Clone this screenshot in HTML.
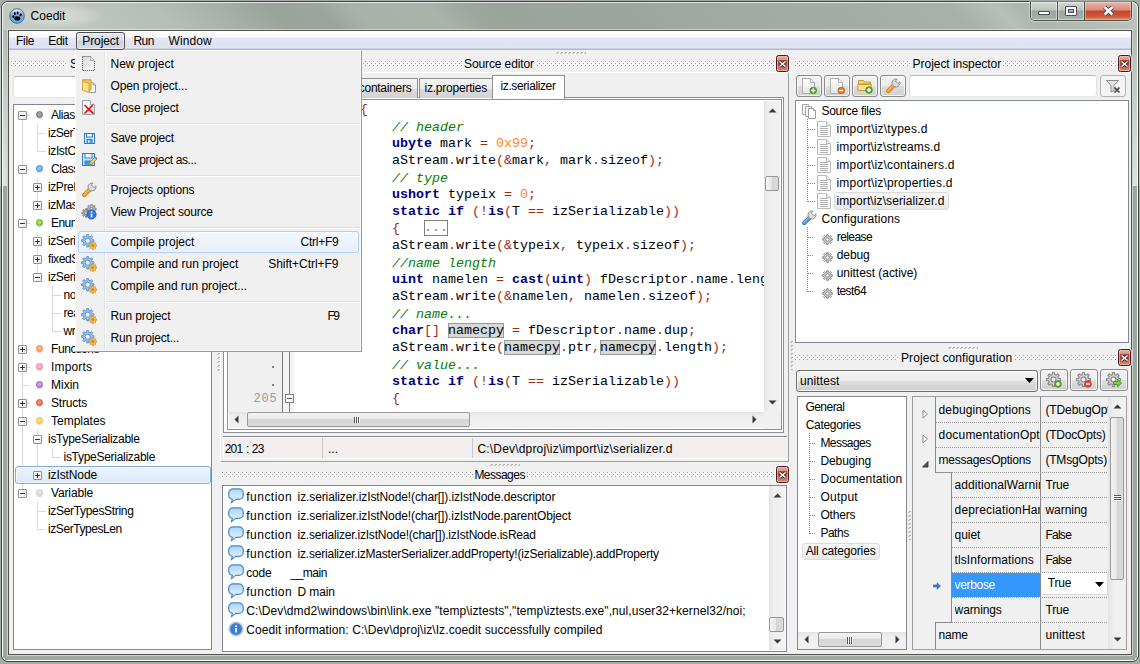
<!DOCTYPE html>
<html><head><meta charset="utf-8"><title>Coedit</title>
<style>
*{box-sizing:border-box;margin:0;padding:0}
html,body{width:1140px;height:664px;overflow:hidden;background:#a3ada5}
body{font-family:"Liberation Sans",sans-serif;font-size:12px;color:#000;position:relative}
.a{position:absolute}
.t{position:absolute;white-space:pre;line-height:14px;height:14px}
.m{font-family:"Liberation Mono",monospace;font-size:13.333px}
#frame{position:absolute;left:1px;top:1px;width:1138px;height:661px;border-radius:7px;
 border:1px solid #3f4340;background:#9fa9a1;overflow:hidden;
 box-shadow:inset 0 0 0 1px rgba(255,255,255,.75)}
#tglass{position:absolute;left:-41px;top:0;width:1220px;height:29px;transform:skewX(45deg);transform-origin:0 0;
 background:linear-gradient(90deg,#c3cac4 0,#c3cac4 40px,#bfc6c0 100px,#b5bdb6 190px,#aab3ab 240px,#99a49b 302px,#9ba59d 352px,#a8b2a9 385px,#a9b3aa 465px,#9ea89f 495px,#99a49b 525px,#9ca69e 645px,#a0aaa2 745px,#a4aea6 895px,#a9b2aa 985px,#b7bfb8 1030px,#adb5ae 1055px,#c0c7c1 1190px)}
#frame:after{content:"";position:absolute;left:0;top:0;right:0;bottom:0;border-radius:6px;box-shadow:inset 0 0 0 1px rgba(255,255,255,.75)}
#client{position:absolute;left:9px;top:31px;width:1122px;height:623px;background:#f0f0f0;
 box-shadow:0 0 0 1px #50554f,0 0 0 2px rgba(255,255,255,.45)}
#menubar{position:absolute;left:0;top:0;width:1122px;height:19px;
 background:linear-gradient(180deg,#ffffff 0,#f7f8fc 6px,#e4e8f5 7px,#dde1f1 16px,#e6e9f5 17px,#aeb6d2 18px,#aeb6d2 19px)}
.grip{position:absolute;height:5px;background-image:
 linear-gradient(#b9b9b9,#b9b9b9),linear-gradient(#b9b9b9,#b9b9b9);
 background-size:1px 1px,1px 1px;}
.xbtn{position:absolute;width:13px;height:17px;border:1px solid #4a1422;border-radius:2.500px;
 background:linear-gradient(180deg,#e6a898 0,#dd9380 4px,#c2482a 4px,#c5533a 9px,#d88a74 15px);
 box-shadow:inset 0 0 0 1px rgba(255,205,195,.55),0 0 0 1px rgba(255,255,255,.7)}
.box{position:absolute;background:#fff;border:1px solid #828790}
.hl{position:absolute;background:#d4d4d4;}
</style></head><body>
<div id="frame"><div id="tglass"></div></div>
<div class="a " style="left:0px;top:8px;width:1px;height:178px;background:#c5cbc6"></div>
<div class="a " style="left:1139px;top:8px;width:1px;height:178px;background:#c5cbc6"></div>
<div class="a " style="left:3px;top:30px;width:4px;height:156px;background:linear-gradient(180deg,#b4bbb5,#dfe3e0)"></div>
<div class="a " style="left:1133px;top:30px;width:4px;height:156px;background:linear-gradient(180deg,#b4bbb5,#dfe3e0)"></div>
<div class="a " style="left:3px;top:186px;width:4px;height:472px;background:#9da79f"></div>
<div class="a " style="left:1133px;top:186px;width:4px;height:472px;background:#9da79f"></div>
<div class="a " style="left:5px;top:656px;width:1130px;height:4px;background:#9fa9a1"></div>
<div class="a " style="left:14px;top:4px;width:90px;height:24px;background:radial-gradient(ellipse at center,rgba(255,255,255,.42) 0,rgba(255,255,255,.2) 45%,rgba(255,255,255,0) 72%)"></div>
<svg class="a" style="left:9px;top:8px" width="16" height="16" viewBox="0 0 16 16"><defs><linearGradient id="aig" x1="0" y1="0" x2="0" y2="1"><stop offset="0" stop-color="#eef0f8"/><stop offset=".45" stop-color="#8f9fd0"/><stop offset="1" stop-color="#3fc4ff"/></linearGradient></defs><circle cx="8" cy="8" r="7.300" fill="url(#aig)" stroke="#3a4f8a" stroke-width=".8"/><ellipse cx="8.300" cy="10.400" rx="3" ry="2.200" fill="#000"/><ellipse cx="4.300" cy="8.600" rx="1.100" ry="1.400" fill="#000" transform="rotate(-30 4.300 8.600)"/><ellipse cx="5.800" cy="5.600" rx="1" ry="1.500" fill="#000" transform="rotate(-12 5.800 5.600)"/><ellipse cx="8.700" cy="4.900" rx="1" ry="1.500" fill="#000" transform="rotate(5 8.700 4.900)"/><ellipse cx="11.700" cy="6.800" rx="1" ry="1.500" fill="#000" transform="rotate(25 11.700 6.800)"/></svg>
<div class="t " style="left:30.6px;top:9px;letter-spacing:0.019px;">Coedit</div>
<div class="a" style="left:1030px;top:2px;width:102px;height:19px;border:1px solid #4b4f4c;border-top:none;border-radius:0 0 5px 5px;overflow:hidden;box-shadow:0 0 0 1px rgba(255,255,255,.35)"><div class="a" style="left:0;top:0;width:27px;height:18px;border-right:1px solid #4b4f4c;background:linear-gradient(180deg,#d3d8d4 0,#bcc4bd 45%,#9aa49c 50%,#a9b2aa 100%);box-shadow:inset 0 0 0 1px rgba(255,255,255,.45)"></div><div class="a" style="left:27px;top:0;width:27px;height:18px;border-right:1px solid #4b4f4c;background:linear-gradient(180deg,#d3d8d4 0,#bcc4bd 45%,#9aa49c 50%,#a9b2aa 100%);box-shadow:inset 0 0 0 1px rgba(255,255,255,.45)"></div><div class="a" style="left:54px;top:0;width:46px;height:18px;background:linear-gradient(180deg,#e9b4a8 0,#d98c7c 45%,#c4432b 50%,#cf5a3c 80%,#d88a6a 100%);box-shadow:inset 0 0 0 1px rgba(255,255,255,.35)"></div></div>
<div class="a " style="left:1038px;top:11px;width:12px;height:4px;background:#fff;border:1px solid #4a4f5f;border-radius:1px"></div>
<div class="a " style="left:1065px;top:6px;width:12px;height:10px;background:#fff;border:1px solid #4a4f5f;border-radius:1px"></div>
<div class="a " style="left:1068px;top:9px;width:6px;height:4px;background:#a7b0a8;border:1px solid #4a4f5f"></div>
<svg class="a" style="left:1102px;top:5px" width="13" height="12" viewBox="0 0 13 12"><path d="M2.600 2.100l7.800 7.400M10.400 2.100l-7.800 7.400" stroke="#47424c" stroke-width="4.400" stroke-linecap="butt"/><path d="M2.600 2.100l7.800 7.400M10.400 2.100l-7.800 7.400" stroke="#fff" stroke-width="2.600" stroke-linecap="butt"/></svg>
<div id="client"><div id="menubar"></div></div>
<div class="t " style="left:16.1px;top:34px;letter-spacing:-0.334px;">File</div>
<div class="t " style="left:48.2px;top:34px;letter-spacing:-0.269px;">Edit</div>
<div class="t " style="left:133.5px;top:34px;letter-spacing:-0.571px;">Run</div>
<div class="t " style="left:168.6px;top:34px;letter-spacing:0.07px;">Window</div>
<div class="a " style="left:76px;top:32px;width:49px;height:18px;border:1px solid #4e4e4e;border-radius:3px;background:linear-gradient(180deg,#e6e8f0 0,#dadde8 45%,#cbd0de 50%,#d9dce8 100%);box-shadow:inset 0 0 0 1px rgba(255,255,255,.5)"></div>
<div class="t " style="left:82.3px;top:34px;letter-spacing:-0.093px;">Project</div>
<svg class="a" style="left:11px;top:60px" width="56" height="7"><defs><pattern id="gp11_61" width="4" height="4" patternUnits="userSpaceOnUse"><rect width="4" height="4" fill="#f6f6f6"/><rect x="0" y="1" width="1" height="1" fill="#9a9a9a"/><rect x="2" y="3" width="1" height="1" fill="#9a9a9a"/><rect x="1" y="2" width="1" height="1" fill="#fff"/><rect x="3" y="0" width="1" height="1" fill="#fff"/></pattern></defs><rect x="0" y="1" width="56" height="5" fill="url(#gp11_61)"/></svg>
<div class="t " style="left:70px;top:57px;">Symbol list</div>
<svg class="a" style="left:133px;top:60px" width="65" height="7"><defs><pattern id="gp133_61" width="4" height="4" patternUnits="userSpaceOnUse"><rect width="4" height="4" fill="#f6f6f6"/><rect x="0" y="1" width="1" height="1" fill="#9a9a9a"/><rect x="2" y="3" width="1" height="1" fill="#9a9a9a"/><rect x="1" y="2" width="1" height="1" fill="#fff"/><rect x="3" y="0" width="1" height="1" fill="#fff"/></pattern></defs><rect x="0" y="1" width="65" height="5" fill="url(#gp133_61)"/></svg>
<div class="xbtn" style="left:201px;top:55px"><svg width="9" height="8" viewBox="0 0 9 8" style="position:absolute;left:1px;top:3.5px"><path d="M1.500 1.500l6 5M7.500 1.500l-6 5" stroke="#2e3446" stroke-width="3.500" stroke-linecap="butt"/><path d="M1.500 1.500l6 5M7.500 1.500l-6 5" stroke="#fff" stroke-width="1.500" stroke-linecap="butt"/></svg></div>
<div class="a " style="left:13px;top:76px;width:199px;height:22px;background:#fff;border:1px solid;border-color:#b5b8bf #dde0e6 #e3e6ec #dde0e6;border-radius:3px"></div>
<div class="a " style="left:13px;top:104px;width:199px;height:546px;background:#fff;border:1px solid #828790"></div>
<div class="a " style="left:22px;top:119px;width:1px;height:374px;background:#d9d9d9"></div>
<div class="a " style="left:37px;top:124px;width:1px;height:28px;background:#d9d9d9"></div>
<div class="a " style="left:37px;top:133px;width:9px;height:1px;background:#d9d9d9"></div>
<div class="a " style="left:37px;top:151px;width:9px;height:1px;background:#d9d9d9"></div>
<div class="a " style="left:37px;top:178px;width:1px;height:28px;background:#d9d9d9"></div>
<div class="a " style="left:37px;top:232px;width:1px;height:46px;background:#d9d9d9"></div>
<div class="a " style="left:52px;top:286px;width:1px;height:46px;background:#d9d9d9"></div>
<div class="a " style="left:52px;top:295px;width:9px;height:1px;background:#d9d9d9"></div>
<div class="a " style="left:52px;top:313px;width:9px;height:1px;background:#d9d9d9"></div>
<div class="a " style="left:52px;top:331px;width:9px;height:1px;background:#d9d9d9"></div>
<div class="a " style="left:37px;top:430px;width:1px;height:46px;background:#d9d9d9"></div>
<div class="a " style="left:52px;top:448px;width:1px;height:10px;background:#d9d9d9"></div>
<div class="a " style="left:52px;top:457px;width:9px;height:1px;background:#d9d9d9"></div>
<div class="a " style="left:37px;top:502px;width:1px;height:28px;background:#d9d9d9"></div>
<div class="a " style="left:37px;top:511px;width:9px;height:1px;background:#d9d9d9"></div>
<div class="a " style="left:37px;top:529px;width:9px;height:1px;background:#d9d9d9"></div>
<div class="a " style="left:22px;top:385px;width:8px;height:1px;background:#d9d9d9"></div>
<div class="a " style="left:27px;top:115px;width:3px;height:1px;background:#d9d9d9"></div>
<div class="a " style="left:27px;top:169px;width:3px;height:1px;background:#d9d9d9"></div>
<div class="a " style="left:27px;top:223px;width:3px;height:1px;background:#d9d9d9"></div>
<div class="a " style="left:27px;top:349px;width:3px;height:1px;background:#d9d9d9"></div>
<div class="a " style="left:27px;top:367px;width:3px;height:1px;background:#d9d9d9"></div>
<div class="a " style="left:27px;top:403px;width:3px;height:1px;background:#d9d9d9"></div>
<div class="a " style="left:27px;top:421px;width:3px;height:1px;background:#d9d9d9"></div>
<div class="a " style="left:27px;top:493px;width:3px;height:1px;background:#d9d9d9"></div>
<div class="a " style="left:15px;top:466px;width:196px;height:18px;border:1px solid #84acdd;border-radius:3px;background:linear-gradient(180deg,#eef5fd 0,#d9e8fb 100%);box-shadow:inset 0 0 0 1px rgba(255,255,255,.6)"></div>
<div class="a " style="left:18px;top:111px;width:9px;height:9px;border:1px solid #8f8f8f;background:linear-gradient(135deg,#fff 0,#ececec 100%);border-radius:1px"><div class="a" style="left:1px;top:3px;width:5px;height:1px;background:#333"></div></div>
<div class="a " style="left:36px;top:111px;width:7.3px;height:7.3px;border-radius:50%;background:radial-gradient(circle at 45% 40%,#a0a0a0 0,#a0a0a0 50%,#6c6c6c 100%);border:1px solid #6c6c6c;box-shadow:0 1px 1px rgba(0,0,0,.18)"></div>
<div class="t " style="left:51px;top:108px;letter-spacing:-0.414px;">Aliases</div>
<div class="t " style="left:48px;top:126px;letter-spacing:-0.445px;">izSerTypes</div>
<div class="t " style="left:48px;top:144px;letter-spacing:-0.382px;">izIstObject</div>
<div class="a " style="left:18px;top:165px;width:9px;height:9px;border:1px solid #8f8f8f;background:linear-gradient(135deg,#fff 0,#ececec 100%);border-radius:1px"><div class="a" style="left:1px;top:3px;width:5px;height:1px;background:#333"></div></div>
<div class="a " style="left:36px;top:165px;width:7.3px;height:7.3px;border-radius:50%;background:radial-gradient(circle at 45% 40%,#80c4f8 0,#80c4f8 50%,#3a8ad8 100%);border:1px solid #3a8ad8;box-shadow:0 1px 1px rgba(0,0,0,.18)"></div>
<div class="t " style="left:51px;top:162px;letter-spacing:-0.457px;">Classes</div>
<div class="a " style="left:33px;top:183px;width:9px;height:9px;border:1px solid #8f8f8f;background:linear-gradient(135deg,#fff 0,#ececec 100%);border-radius:1px"><div class="a" style="left:1px;top:3px;width:5px;height:1px;background:#333"></div><div class="a" style="left:3px;top:1px;width:1px;height:5px;background:#333"></div></div>
<div class="t " style="left:48px;top:180px;letter-spacing:-0.429px;">izPreIstNode</div>
<div class="a " style="left:33px;top:201px;width:9px;height:9px;border:1px solid #8f8f8f;background:linear-gradient(135deg,#fff 0,#ececec 100%);border-radius:1px"><div class="a" style="left:1px;top:3px;width:5px;height:1px;background:#333"></div><div class="a" style="left:3px;top:1px;width:1px;height:5px;background:#333"></div></div>
<div class="t " style="left:48px;top:198px;letter-spacing:-0.397px;">izMasterSerializer</div>
<div class="a " style="left:18px;top:219px;width:9px;height:9px;border:1px solid #8f8f8f;background:linear-gradient(135deg,#fff 0,#ececec 100%);border-radius:1px"><div class="a" style="left:1px;top:3px;width:5px;height:1px;background:#333"></div></div>
<div class="a " style="left:36px;top:219px;width:7.3px;height:7.3px;border-radius:50%;background:radial-gradient(circle at 45% 40%,#a4e048 0,#a4e048 50%,#68a818 100%);border:1px solid #68a818;box-shadow:0 1px 1px rgba(0,0,0,.18)"></div>
<div class="t " style="left:51px;top:216px;letter-spacing:-0.56px;">Enums</div>
<div class="a " style="left:33px;top:237px;width:9px;height:9px;border:1px solid #8f8f8f;background:linear-gradient(135deg,#fff 0,#ececec 100%);border-radius:1px"><div class="a" style="left:1px;top:3px;width:5px;height:1px;background:#333"></div><div class="a" style="left:3px;top:1px;width:1px;height:5px;background:#333"></div></div>
<div class="t " style="left:48px;top:234px;letter-spacing:-0.411px;">izSerializationMode</div>
<div class="a " style="left:33px;top:255px;width:9px;height:9px;border:1px solid #8f8f8f;background:linear-gradient(135deg,#fff 0,#ececec 100%);border-radius:1px"><div class="a" style="left:1px;top:3px;width:5px;height:1px;background:#333"></div><div class="a" style="left:3px;top:1px;width:1px;height:5px;background:#333"></div></div>
<div class="t " style="left:48px;top:252px;letter-spacing:-0.439px;">fixedSerTypes</div>
<div class="a " style="left:33px;top:273px;width:9px;height:9px;border:1px solid #8f8f8f;background:linear-gradient(135deg,#fff 0,#ececec 100%);border-radius:1px"><div class="a" style="left:1px;top:3px;width:5px;height:1px;background:#333"></div></div>
<div class="t " style="left:48px;top:270px;letter-spacing:-0.4px;">izSerializationFormat</div>
<div class="t " style="left:63.5px;top:288px;letter-spacing:-0.501px;">none</div>
<div class="t " style="left:63.5px;top:306px;letter-spacing:-0.434px;">reader</div>
<div class="t " style="left:63.5px;top:324px;letter-spacing:-0.367px;">writer</div>
<div class="a " style="left:18px;top:345px;width:9px;height:9px;border:1px solid #8f8f8f;background:linear-gradient(135deg,#fff 0,#ececec 100%);border-radius:1px"><div class="a" style="left:1px;top:3px;width:5px;height:1px;background:#333"></div><div class="a" style="left:3px;top:1px;width:1px;height:5px;background:#333"></div></div>
<div class="a " style="left:36px;top:345px;width:7.3px;height:7.3px;border-radius:50%;background:radial-gradient(circle at 45% 40%,#ffb47c 0,#ffb47c 50%,#e8853a 100%);border:1px solid #e8853a;box-shadow:0 1px 1px rgba(0,0,0,.18)"></div>
<div class="t " style="left:51px;top:342px;letter-spacing:-0.434px;">Functions</div>
<div class="a " style="left:18px;top:363px;width:9px;height:9px;border:1px solid #8f8f8f;background:linear-gradient(135deg,#fff 0,#ececec 100%);border-radius:1px"><div class="a" style="left:1px;top:3px;width:5px;height:1px;background:#333"></div><div class="a" style="left:3px;top:1px;width:1px;height:5px;background:#333"></div></div>
<div class="a " style="left:36px;top:363px;width:7.3px;height:7.3px;border-radius:50%;background:radial-gradient(circle at 45% 40%,#ffb4c4 0,#ffb4c4 50%,#e8809a 100%);border:1px solid #e8809a;box-shadow:0 1px 1px rgba(0,0,0,.18)"></div>
<div class="t " style="left:51px;top:360px;letter-spacing:0.17px;">Imports</div>
<div class="a " style="left:36px;top:381px;width:7.3px;height:7.3px;border-radius:50%;background:radial-gradient(circle at 45% 40%,#cc9ce4 0,#cc9ce4 50%,#9a50b8 100%);border:1px solid #9a50b8;box-shadow:0 1px 1px rgba(0,0,0,.18)"></div>
<div class="t " style="left:51px;top:378px;letter-spacing:-0.0px;">Mixin</div>
<div class="a " style="left:18px;top:399px;width:9px;height:9px;border:1px solid #8f8f8f;background:linear-gradient(135deg,#fff 0,#ececec 100%);border-radius:1px"><div class="a" style="left:1px;top:3px;width:5px;height:1px;background:#333"></div><div class="a" style="left:3px;top:1px;width:1px;height:5px;background:#333"></div></div>
<div class="a " style="left:36px;top:399px;width:7.3px;height:7.3px;border-radius:50%;background:radial-gradient(circle at 45% 40%,#f8866c 0,#f8866c 50%,#d84a30 100%);border:1px solid #d84a30;box-shadow:0 1px 1px rgba(0,0,0,.18)"></div>
<div class="t " style="left:51px;top:396px;letter-spacing:-0.192px;">Structs</div>
<div class="a " style="left:18px;top:417px;width:9px;height:9px;border:1px solid #8f8f8f;background:linear-gradient(135deg,#fff 0,#ececec 100%);border-radius:1px"><div class="a" style="left:1px;top:3px;width:5px;height:1px;background:#333"></div></div>
<div class="a " style="left:36px;top:417px;width:7.3px;height:7.3px;border-radius:50%;background:radial-gradient(circle at 45% 40%,#ffdc78 0,#ffdc78 50%,#f0b830 100%);border:1px solid #f0b830;box-shadow:0 1px 1px rgba(0,0,0,.18)"></div>
<div class="t " style="left:51px;top:414px;letter-spacing:-0.01px;">Templates</div>
<div class="a " style="left:33px;top:435px;width:9px;height:9px;border:1px solid #8f8f8f;background:linear-gradient(135deg,#fff 0,#ececec 100%);border-radius:1px"><div class="a" style="left:1px;top:3px;width:5px;height:1px;background:#333"></div></div>
<div class="t " style="left:48px;top:432px;letter-spacing:-0.284px;">isTypeSerializable</div>
<div class="t " style="left:63.5px;top:450px;letter-spacing:-0.284px;">isTypeSerializable</div>
<div class="a " style="left:33px;top:471px;width:9px;height:9px;border:1px solid #8f8f8f;background:linear-gradient(135deg,#fff 0,#ececec 100%);border-radius:1px"><div class="a" style="left:1px;top:3px;width:5px;height:1px;background:#333"></div><div class="a" style="left:3px;top:1px;width:1px;height:5px;background:#333"></div></div>
<div class="t " style="left:48px;top:468px;letter-spacing:-0.114px;">izIstNode</div>
<div class="a " style="left:18px;top:489px;width:9px;height:9px;border:1px solid #8f8f8f;background:linear-gradient(135deg,#fff 0,#ececec 100%);border-radius:1px"><div class="a" style="left:1px;top:3px;width:5px;height:1px;background:#333"></div></div>
<div class="a " style="left:36px;top:489px;width:7.3px;height:7.3px;border-radius:50%;background:radial-gradient(circle at 45% 40%,#e6e6e6 0,#e6e6e6 50%,#c8c8c8 100%);border:1px solid #c8c8c8;box-shadow:0 1px 1px rgba(0,0,0,.18)"></div>
<div class="t " style="left:51px;top:486px;letter-spacing:-0.142px;">Variable</div>
<div class="t " style="left:48px;top:504px;letter-spacing:-0.325px;">izSerTypesString</div>
<div class="t " style="left:48px;top:522px;letter-spacing:-0.429px;">izSerTypesLen</div>
<svg class="a" style="left:217px;top:340px" width="4" height="32"><defs><pattern id="vg" width="4" height="4" patternUnits="userSpaceOnUse"><rect x="1" y="1" width="2" height="1" fill="#b0b0b0"/><rect x="0" y="2" width="2" height="1" fill="#c8c8c8"/></pattern></defs><rect width="4" height="32" fill="url(#vg)"/></svg>
<svg class="a" style="left:556px;top:51px" width="30" height="4"><defs><pattern id="mg" width="4" height="4" patternUnits="userSpaceOnUse"><rect x="1" y="1" width="2" height="1" fill="#b4b4b4"/><rect x="0" y="2" width="2" height="1" fill="#c9c9c9"/></pattern></defs><rect width="30" height="4" fill="url(#mg)"/></svg>
<div class="a " style="left:220px;top:72px;width:569px;height:390px;border:1px solid #fff;border-right-color:#a0a0a0;border-bottom-color:#a0a0a0"></div>
<svg class="a" style="left:225px;top:60px" width="238" height="7"><defs><pattern id="gp225_61" width="4" height="4" patternUnits="userSpaceOnUse"><rect width="4" height="4" fill="#f6f6f6"/><rect x="0" y="1" width="1" height="1" fill="#9a9a9a"/><rect x="2" y="3" width="1" height="1" fill="#9a9a9a"/><rect x="1" y="2" width="1" height="1" fill="#fff"/><rect x="3" y="0" width="1" height="1" fill="#fff"/></pattern></defs><rect x="0" y="1" width="238" height="5" fill="url(#gp225_61)"/></svg>
<div class="t " style="left:464px;top:57px;letter-spacing:-0.106px;">Source editor</div>
<svg class="a" style="left:537px;top:60px" width="237" height="7"><defs><pattern id="gp537_61" width="4" height="4" patternUnits="userSpaceOnUse"><rect width="4" height="4" fill="#f6f6f6"/><rect x="0" y="1" width="1" height="1" fill="#9a9a9a"/><rect x="2" y="3" width="1" height="1" fill="#9a9a9a"/><rect x="1" y="2" width="1" height="1" fill="#fff"/><rect x="3" y="0" width="1" height="1" fill="#fff"/></pattern></defs><rect x="0" y="1" width="237" height="5" fill="url(#gp537_61)"/></svg>
<div class="xbtn" style="left:776px;top:55px"><svg width="9" height="8" viewBox="0 0 9 8" style="position:absolute;left:1px;top:3.5px"><path d="M1.500 1.500l6 5M7.500 1.500l-6 5" stroke="#2e3446" stroke-width="3.500" stroke-linecap="butt"/><path d="M1.500 1.500l6 5M7.500 1.500l-6 5" stroke="#fff" stroke-width="1.500" stroke-linecap="butt"/></svg></div>
<div class="a " style="left:223px;top:97px;width:561px;height:336px;border:1px solid #8b8f98;background:#fff"></div>
<div class="a " style="left:225px;top:78px;width:57px;height:20px;border:1px solid #8e8f91;border-bottom:none;background:linear-gradient(180deg,#f3f3f3 0,#ebebeb 50%,#dcdcdc 51%,#d2d2d2 100%);"></div>
<div class="t " style="left:231px;top:81px;letter-spacing:-0.335px;">iz.types</div>
<div class="a " style="left:282px;top:78px;width:60px;height:20px;border:1px solid #8e8f91;border-bottom:none;background:linear-gradient(180deg,#f3f3f3 0,#ebebeb 50%,#dcdcdc 51%,#d2d2d2 100%);"></div>
<div class="t " style="left:288px;top:81px;letter-spacing:-0.567px;">iz.streams</div>
<div class="a " style="left:342px;top:78px;width:76px;height:20px;border:1px solid #8e8f91;border-bottom:none;background:linear-gradient(180deg,#f3f3f3 0,#ebebeb 50%,#dcdcdc 51%,#d2d2d2 100%);"></div>
<div class="t " style="left:347.5px;top:81px;letter-spacing:-0.259px;">iz.containers</div>
<div class="a " style="left:419px;top:78px;width:74px;height:20px;border:1px solid #8e8f91;border-bottom:none;background:linear-gradient(180deg,#f3f3f3 0,#ebebeb 50%,#dcdcdc 51%,#d2d2d2 100%);"></div>
<div class="t " style="left:424.5px;top:81px;letter-spacing:-0.22px;">iz.properties</div>
<div class="a " style="left:492px;top:75px;width:73px;height:24px;border:1px solid #8e8f91;border-bottom:none;background:#fff"></div>
<div class="t " style="left:500.5px;top:79px;letter-spacing:-0.386px;">iz.serializer</div>
<div class="a " style="left:227px;top:99px;width:555px;height:331px;border:1px solid #8b8f98;background:#fff"></div>
<div class="a " style="left:228px;top:100px;width:54px;height:312px;background:#f0f0f0"></div>
<div class="a " style="left:282px;top:100px;width:1px;height:312px;background:#7a7a7a"></div>
<div class="a " style="left:283px;top:100px;width:11px;height:312px;background:#f4f4f4"></div>
<div class="a " style="left:289px;top:100px;width:1px;height:312px;background:#7f7f7f"></div>
<div class="a " style="left:285px;top:394px;width:9px;height:9px;border:1px solid #7f7f7f;background:#f4f4f4"><div class="a" style="left:1px;top:3px;width:5px;height:1px;background:#555"></div></div>
<div class="t m" style="left:253.5px;top:392px;color:#9a9a9a;font-size:12px;letter-spacing:0.8px">205</div>
<div class="a " style="left:272px;top:366px;width:2px;height:2px;background:#8f7f7f"></div>
<div class="a " style="left:272px;top:384px;width:2px;height:2px;background:#8f7f7f"></div>
<div class="a m" style="left:296px;top:101px;width:468px;height:311px;overflow:hidden;line-height:17px"><div style="height:17px;white-space:pre">        <span style="color:#9c2a1a">{</span></div><div style="height:17px;white-space:pre">            <i style="color:#087c08;position:relative;top:1px">// header</i></div><div style="height:17px;white-space:pre">            <b style="color:#000080">ubyte</b> mark <span style="color:#9c2a1a">=</span> <span style="color:#ff8a1a">0x99</span><span style="color:#9c2a1a">;</span></div><div style="height:17px;white-space:pre">            aStream<span style="color:#9c2a1a">.</span>write<span style="color:#9c2a1a">(&amp;</span>mark<span style="color:#9c2a1a">,</span> mark<span style="color:#9c2a1a">.</span>sizeof<span style="color:#9c2a1a">);</span></div><div style="height:17px;white-space:pre">            <i style="color:#087c08;position:relative;top:1px">// type</i></div><div style="height:17px;white-space:pre">            <b style="color:#000080">ushort</b> typeix <span style="color:#9c2a1a">=</span> <span style="color:#ff8a1a">0</span><span style="color:#9c2a1a">;</span></div><div style="height:17px;white-space:pre">            <b style="color:#000080">static</b> <b style="color:#000080">if</b> <span style="color:#9c2a1a">(!</span><b style="color:#000080">is</b><span style="color:#9c2a1a">(</span>T <span style="color:#9c2a1a">==</span> izSerializable<span style="color:#9c2a1a">))</span></div><div style="height:17px;white-space:pre">            <span style="color:#9c2a1a">{</span>   <span style="color:#808080;box-shadow:0 0 0 1px #808080 inset;display:inline-block;height:16px;line-height:15px;vertical-align:top;margin-top:0px">...</span></div><div style="height:17px;white-space:pre">            aStream<span style="color:#9c2a1a">.</span>write<span style="color:#9c2a1a">(&amp;</span>typeix<span style="color:#9c2a1a">,</span> typeix<span style="color:#9c2a1a">.</span>sizeof<span style="color:#9c2a1a">);</span></div><div style="height:17px;white-space:pre">            <i style="color:#087c08;position:relative;top:1px">//name length</i></div><div style="height:17px;white-space:pre">            <b style="color:#000080">uint</b> namelen <span style="color:#9c2a1a">=</span> <b style="color:#000080">cast</b><span style="color:#9c2a1a">(</span><b style="color:#000080">uint</b><span style="color:#9c2a1a">)</span> fDescriptor<span style="color:#9c2a1a">.</span>name<span style="color:#9c2a1a">.</span>length<span style="color:#9c2a1a">;</span></div><div style="height:17px;white-space:pre">            aStream<span style="color:#9c2a1a">.</span>write<span style="color:#9c2a1a">(&amp;</span>namelen<span style="color:#9c2a1a">,</span> namelen<span style="color:#9c2a1a">.</span>sizeof<span style="color:#9c2a1a">);</span></div><div style="height:17px;white-space:pre">            <i style="color:#087c08;position:relative;top:1px">// name...</i></div><div style="height:17px;white-space:pre">            <b style="color:#000080">char</b><span style="color:#9c2a1a">[]</span> <span style="background:#d8d8d8;box-shadow:0 0 0 1px #9a9a9a inset">namecpy</span> <span style="color:#9c2a1a">=</span> fDescriptor<span style="color:#9c2a1a">.</span>name<span style="color:#9c2a1a">.</span>dup<span style="color:#9c2a1a">;</span></div><div style="height:17px;white-space:pre">            aStream<span style="color:#9c2a1a">.</span>write<span style="color:#9c2a1a">(</span><span style="background:#d8d8d8;box-shadow:0 0 0 1px #9a9a9a inset">namecpy</span><span style="color:#9c2a1a">.</span>ptr<span style="color:#9c2a1a">,</span><span style="background:#d8d8d8;box-shadow:0 0 0 1px #9a9a9a inset">namecpy</span><span style="color:#9c2a1a">.</span>length<span style="color:#9c2a1a">);</span></div><div style="height:17px;white-space:pre">            <i style="color:#087c08;position:relative;top:1px">// value...</i></div><div style="height:17px;white-space:pre">            <b style="color:#000080">static</b> <b style="color:#000080">if</b> <span style="color:#9c2a1a">(!</span><b style="color:#000080">is</b><span style="color:#9c2a1a">(</span>T <span style="color:#9c2a1a">==</span> izSerializable<span style="color:#9c2a1a">))</span></div><div style="height:17px;white-space:pre">            <span style="color:#9c2a1a">{</span></div></div>
<div class="a " style="left:764px;top:101px;width:16px;height:310px;background:linear-gradient(90deg,#e3e3e3 0,#efefef 30%,#f1f1f1 100%)"></div>
<svg class="a" style="left:768px;top:106px" width="9" height="9" viewBox="0 0 9 9"><path d="M0.500 6.500L4.500 2.500L8.500 6.500Z" fill="#3a3a3a"/></svg>
<svg class="a" style="left:768px;top:398px" width="9" height="9" viewBox="0 0 9 9"><path d="M0.500 2.500L4.500 6.500L8.500 2.500Z" fill="#3a3a3a"/></svg>
<div class="a " style="left:765px;top:176px;width:14px;height:15px;border:1px solid #979797;border-radius:2px;background:linear-gradient(90deg,#f4f4f4 0,#e8e8e8 45%,#d4d4d4 50%,#dcdcdc 100%)"></div>
<div class="a " style="left:229px;top:412px;width:535px;height:16px;background:linear-gradient(180deg,#e3e3e3 0,#efefef 30%,#f1f1f1 100%)"></div>
<div class="a " style="left:764px;top:411px;width:17px;height:18px;background:#f0f0f0"></div>
<svg class="a" style="left:232px;top:415px" width="9" height="9" viewBox="0 0 9 9"><path d="M6.500 0.500L2.500 4.500L6.500 8.500Z" fill="#3a3a3a"/></svg>
<svg class="a" style="left:750px;top:415px" width="9" height="9" viewBox="0 0 9 9"><path d="M2.500 0.500L6.500 4.500L2.500 8.500Z" fill="#3a3a3a"/></svg>
<div class="a " style="left:247px;top:412px;width:223px;height:15px;border:1px solid #979797;border-radius:2px;background:linear-gradient(180deg,#f4f4f4 0,#e8e8e8 45%,#d4d4d4 50%,#dcdcdc 100%)"><div class="a" style="left:106px;top:4px;width:1px;height:6px;background:#555;box-shadow:2px 0 0 #555,4px 0 0 #555,1px 0 0 #fff,3px 0 0 #fff,5px 0 0 #fff"></div></div>
<div class="a " style="left:223px;top:436px;width:564px;height:1px;background:#8a8a8a"></div>
<div class="a " style="left:223px;top:437px;width:563px;height:22px;background:#fff"></div>
<div class="a " style="left:224px;top:438px;width:562px;height:20px;background:#f1eeed"></div>
<div class="a " style="left:322px;top:438px;width:1px;height:20px;background:#c8c5c4"></div>
<div class="a " style="left:472px;top:438px;width:1px;height:20px;background:#c8c5c4"></div>
<div class="t " style="left:224.8px;top:442px;letter-spacing:-0.874px;">201</div>
<div class="t " style="left:246px;top:442px;">:</div>
<div class="t " style="left:251.8px;top:442px;letter-spacing:-0.774px;">23</div>
<div class="t " style="left:328px;top:442px;">...</div>
<div class="t " style="left:477.4px;top:442px;letter-spacing:0.188px;">C:\Dev\dproj\iz\import\iz\serializer.d</div>
<svg class="a" style="left:490px;top:463px" width="30" height="4"><rect width="30" height="4" fill="url(#mg)"/></svg>
<svg class="a" style="left:222px;top:471px" width="251" height="7"><defs><pattern id="gp222_472" width="4" height="4" patternUnits="userSpaceOnUse"><rect width="4" height="4" fill="#f6f6f6"/><rect x="0" y="1" width="1" height="1" fill="#9a9a9a"/><rect x="2" y="3" width="1" height="1" fill="#9a9a9a"/><rect x="1" y="2" width="1" height="1" fill="#fff"/><rect x="3" y="0" width="1" height="1" fill="#fff"/></pattern></defs><rect x="0" y="1" width="251" height="5" fill="url(#gp222_472)"/></svg>
<div class="t " style="left:474.4px;top:468px;letter-spacing:-0.524px;">Messages</div>
<svg class="a" style="left:527px;top:471px" width="247" height="7"><defs><pattern id="gp527_472" width="4" height="4" patternUnits="userSpaceOnUse"><rect width="4" height="4" fill="#f6f6f6"/><rect x="0" y="1" width="1" height="1" fill="#9a9a9a"/><rect x="2" y="3" width="1" height="1" fill="#9a9a9a"/><rect x="1" y="2" width="1" height="1" fill="#fff"/><rect x="3" y="0" width="1" height="1" fill="#fff"/></pattern></defs><rect x="0" y="1" width="247" height="5" fill="url(#gp527_472)"/></svg>
<div class="xbtn" style="left:776px;top:466px"><svg width="9" height="8" viewBox="0 0 9 8" style="position:absolute;left:1px;top:3.5px"><path d="M1.500 1.500l6 5M7.500 1.500l-6 5" stroke="#2e3446" stroke-width="3.500" stroke-linecap="butt"/><path d="M1.500 1.500l6 5M7.500 1.500l-6 5" stroke="#fff" stroke-width="1.500" stroke-linecap="butt"/></svg></div>
<div class="a " style="left:222px;top:485px;width:565px;height:167px;border:1px solid #828790;background:#fff"></div>
<div class="a" style="left:228px;top:488px;width:16px;height:16px;"><svg width="16" height="16" viewBox="0 0 16 16" ><defs><linearGradient id="bg" x1="0" y1="0" x2="0" y2="1"><stop offset="0" stop-color="#a9d5f9"/><stop offset="1" stop-color="#eef7ff"/></linearGradient></defs><path d="M5 .800h6a4.300 4.300 0 0 1 4.300 4.300v2a4.300 4.300 0 0 1-4.300 4.300h-3.300l-4.500 3.500 1.300-3.600a4.300 4.300 0 0 1-3.800-4.200v-2a4.300 4.300 0 0 1 4.300-4.300z" fill="url(#bg)" stroke="#4b8acb" stroke-width="1.200" stroke-linejoin="round"/></svg></div>
<div class="t " style="left:246.3px;top:490px;letter-spacing:0.471px;">function</div>
<div class="t " style="left:297.6px;top:490px;letter-spacing:-0.108px;">iz.serializer.izIstNode!(char[]).izIstNode.descriptor</div>
<div class="a" style="left:228px;top:507px;width:16px;height:16px;"><svg width="16" height="16" viewBox="0 0 16 16" ><defs><linearGradient id="bg" x1="0" y1="0" x2="0" y2="1"><stop offset="0" stop-color="#a9d5f9"/><stop offset="1" stop-color="#eef7ff"/></linearGradient></defs><path d="M5 .800h6a4.300 4.300 0 0 1 4.300 4.300v2a4.300 4.300 0 0 1-4.300 4.300h-3.300l-4.500 3.500 1.300-3.600a4.300 4.300 0 0 1-3.800-4.200v-2a4.300 4.300 0 0 1 4.300-4.300z" fill="url(#bg)" stroke="#4b8acb" stroke-width="1.200" stroke-linejoin="round"/></svg></div>
<div class="t " style="left:246.3px;top:509px;letter-spacing:0.471px;">function</div>
<div class="t " style="left:297.6px;top:509px;letter-spacing:-0.11px;">iz.serializer.izIstNode!(char[]).izIstNode.parentObject</div>
<div class="a" style="left:228px;top:526px;width:16px;height:16px;"><svg width="16" height="16" viewBox="0 0 16 16" ><defs><linearGradient id="bg" x1="0" y1="0" x2="0" y2="1"><stop offset="0" stop-color="#a9d5f9"/><stop offset="1" stop-color="#eef7ff"/></linearGradient></defs><path d="M5 .800h6a4.300 4.300 0 0 1 4.300 4.300v2a4.300 4.300 0 0 1-4.300 4.300h-3.300l-4.500 3.500 1.300-3.600a4.300 4.300 0 0 1-3.800-4.200v-2a4.300 4.300 0 0 1 4.300-4.300z" fill="url(#bg)" stroke="#4b8acb" stroke-width="1.200" stroke-linejoin="round"/></svg></div>
<div class="t " style="left:246.3px;top:528px;letter-spacing:0.471px;">function</div>
<div class="t " style="left:297.6px;top:528px;letter-spacing:-0.202px;">iz.serializer.izIstNode!(char[]).izIstNode.isRead</div>
<div class="a" style="left:228px;top:545px;width:16px;height:16px;"><svg width="16" height="16" viewBox="0 0 16 16" ><defs><linearGradient id="bg" x1="0" y1="0" x2="0" y2="1"><stop offset="0" stop-color="#a9d5f9"/><stop offset="1" stop-color="#eef7ff"/></linearGradient></defs><path d="M5 .800h6a4.300 4.300 0 0 1 4.300 4.300v2a4.300 4.300 0 0 1-4.300 4.300h-3.300l-4.500 3.500 1.300-3.600a4.300 4.300 0 0 1-3.800-4.200v-2a4.300 4.300 0 0 1 4.300-4.300z" fill="url(#bg)" stroke="#4b8acb" stroke-width="1.200" stroke-linejoin="round"/></svg></div>
<div class="t " style="left:246.3px;top:547px;letter-spacing:0.471px;">function</div>
<div class="t " style="left:297.6px;top:547px;letter-spacing:-0.213px;">iz.serializer.izMasterSerializer.addProperty!(izSerializable).addProperty</div>
<div class="a" style="left:228px;top:564px;width:16px;height:16px;"><svg width="16" height="16" viewBox="0 0 16 16" ><defs><linearGradient id="bg" x1="0" y1="0" x2="0" y2="1"><stop offset="0" stop-color="#a9d5f9"/><stop offset="1" stop-color="#eef7ff"/></linearGradient></defs><path d="M5 .800h6a4.300 4.300 0 0 1 4.300 4.300v2a4.300 4.300 0 0 1-4.300 4.300h-3.300l-4.500 3.500 1.300-3.600a4.300 4.300 0 0 1-3.800-4.200v-2a4.300 4.300 0 0 1 4.300-4.300z" fill="url(#bg)" stroke="#4b8acb" stroke-width="1.200" stroke-linejoin="round"/></svg></div>
<div class="t " style="left:246.3px;top:566px;letter-spacing:-0.205px;">code</div>
<div class="t " style="left:290.5px;top:566px;letter-spacing:-0.51px;">__main</div>
<div class="a" style="left:228px;top:583px;width:16px;height:16px;"><svg width="16" height="16" viewBox="0 0 16 16" ><defs><linearGradient id="bg" x1="0" y1="0" x2="0" y2="1"><stop offset="0" stop-color="#a9d5f9"/><stop offset="1" stop-color="#eef7ff"/></linearGradient></defs><path d="M5 .800h6a4.300 4.300 0 0 1 4.300 4.300v2a4.300 4.300 0 0 1-4.300 4.300h-3.300l-4.500 3.500 1.300-3.600a4.300 4.300 0 0 1-3.800-4.200v-2a4.300 4.300 0 0 1 4.300-4.300z" fill="url(#bg)" stroke="#4b8acb" stroke-width="1.200" stroke-linejoin="round"/></svg></div>
<div class="t " style="left:246.3px;top:585px;letter-spacing:0.471px;">function</div>
<div class="t " style="left:297.6px;top:585px;letter-spacing:-0.152px;">D main</div>
<div class="a" style="left:228px;top:602px;width:16px;height:16px;"><svg width="16" height="16" viewBox="0 0 16 16" ><defs><linearGradient id="bg" x1="0" y1="0" x2="0" y2="1"><stop offset="0" stop-color="#a9d5f9"/><stop offset="1" stop-color="#eef7ff"/></linearGradient></defs><path d="M5 .800h6a4.300 4.300 0 0 1 4.300 4.300v2a4.300 4.300 0 0 1-4.300 4.300h-3.300l-4.500 3.500 1.300-3.600a4.300 4.300 0 0 1-3.800-4.200v-2a4.300 4.300 0 0 1 4.300-4.300z" fill="url(#bg)" stroke="#4b8acb" stroke-width="1.200" stroke-linejoin="round"/></svg></div>
<div class="t " style="left:246.3px;top:604px;letter-spacing:0.079px;">C:\Dev\dmd2\windows\bin\link.exe "temp\iztests","temp\iztests.exe",nul,user32+kernel32/noi;</div>
<div class="a" style="left:228px;top:621px;width:16px;height:16px;"><svg width="16" height="16" viewBox="0 0 16 16" ><circle cx="8" cy="8" r="6.5" fill="#3f7fcf" stroke="#c9d9ee" stroke-width="1"/><circle cx="8" cy="8" r="7" fill="none" stroke="#8fa9cc" stroke-width=".6"/><rect x="7.200" y="7" width="1.700" height="4.500" fill="#fff"/><rect x="7.200" y="4.300" width="1.700" height="1.700" fill="#fff"/></svg></div>
<div class="t " style="left:246.3px;top:623px;letter-spacing:0.092px;">Coedit information: C:\Dev\dproj\iz\Iz.coedit successfully compiled</div>
<div class="a " style="left:769px;top:486px;width:16px;height:164px;background:linear-gradient(90deg,#e3e3e3 0,#efefef 30%,#f1f1f1 100%)"></div>
<svg class="a" style="left:773px;top:491px" width="9" height="9" viewBox="0 0 9 9"><path d="M0.500 6.500L4.500 2.500L8.500 6.500Z" fill="#3a3a3a"/></svg>
<svg class="a" style="left:773px;top:637px" width="9" height="9" viewBox="0 0 9 9"><path d="M0.500 2.500L4.500 6.500L8.500 2.500Z" fill="#3a3a3a"/></svg>
<div class="a " style="left:769px;top:617px;width:15px;height:15px;border:1px solid #979797;border-radius:2px;background:linear-gradient(90deg,#f4f4f4 0,#e8e8e8 45%,#d4d4d4 50%,#dcdcdc 100%)"></div>
<svg class="a" style="left:790px;top:340px" width="4" height="30"><rect width="4" height="30" fill="url(#vg)"/></svg>
<svg class="a" style="left:795px;top:60px" width="116" height="7"><defs><pattern id="gp795_61" width="4" height="4" patternUnits="userSpaceOnUse"><rect width="4" height="4" fill="#f6f6f6"/><rect x="0" y="1" width="1" height="1" fill="#9a9a9a"/><rect x="2" y="3" width="1" height="1" fill="#9a9a9a"/><rect x="1" y="2" width="1" height="1" fill="#fff"/><rect x="3" y="0" width="1" height="1" fill="#fff"/></pattern></defs><rect x="0" y="1" width="116" height="5" fill="url(#gp795_61)"/></svg>
<div class="t " style="left:912.6px;top:57px;letter-spacing:-0.046px;">Project inspector</div>
<svg class="a" style="left:1003px;top:60px" width="113" height="7"><defs><pattern id="gp1003_61" width="4" height="4" patternUnits="userSpaceOnUse"><rect width="4" height="4" fill="#f6f6f6"/><rect x="0" y="1" width="1" height="1" fill="#9a9a9a"/><rect x="2" y="3" width="1" height="1" fill="#9a9a9a"/><rect x="1" y="2" width="1" height="1" fill="#fff"/><rect x="3" y="0" width="1" height="1" fill="#fff"/></pattern></defs><rect x="0" y="1" width="113" height="5" fill="url(#gp1003_61)"/></svg>
<div class="xbtn" style="left:1118px;top:55px"><svg width="9" height="8" viewBox="0 0 9 8" style="position:absolute;left:1px;top:3.5px"><path d="M1.500 1.500l6 5M7.500 1.500l-6 5" stroke="#2e3446" stroke-width="3.500" stroke-linecap="butt"/><path d="M1.500 1.500l6 5M7.500 1.500l-6 5" stroke="#fff" stroke-width="1.500" stroke-linecap="butt"/></svg></div>
<div class="a " style="left:796px;top:75px;width:26px;height:22px;border:1px solid #8a8a8a;border-radius:3px;background:linear-gradient(180deg,#f3f3f3 0,#ececec 48%,#dedede 52%,#d0d0d0 100%);box-shadow:inset 0 0 0 1px rgba(255,255,255,.7)"></div>
<div class="a" style="left:801px;top:78px;width:16px;height:16px;"><svg width="16" height="16" viewBox="0 0 16 16" ><defs><linearGradient id="pgg" x1="0" y1="0" x2="0" y2="1"><stop offset="0" stop-color="#ffffff"/><stop offset="1" stop-color="#e6e6e6"/></linearGradient></defs><path d="M1.500 .500h8l4 4v11h-12z" fill="url(#pgg)" stroke="#adadad"/><path d="M9.500 .500v4h4" fill="#f2f2f2" stroke="#adadad"/><circle cx="12.3" cy="12.5" r="3.300" fill="#5fb336" stroke="#3d8a1e" stroke-width=".8"/><path d="M10.3 12.5h4" stroke="#fff" stroke-width="1.300"/><path d="M12.3 10.5v4" stroke="#fff" stroke-width="1.300"/></svg></div>
<div class="a " style="left:824px;top:75px;width:26px;height:22px;border:1px solid #8a8a8a;border-radius:3px;background:linear-gradient(180deg,#f3f3f3 0,#ececec 48%,#dedede 52%,#d0d0d0 100%);box-shadow:inset 0 0 0 1px rgba(255,255,255,.7)"></div>
<div class="a" style="left:829px;top:78px;width:16px;height:16px;"><svg width="16" height="16" viewBox="0 0 16 16" ><defs><linearGradient id="pgg" x1="0" y1="0" x2="0" y2="1"><stop offset="0" stop-color="#ffffff"/><stop offset="1" stop-color="#e6e6e6"/></linearGradient></defs><path d="M1.500 .500h8l4 4v11h-12z" fill="url(#pgg)" stroke="#adadad"/><path d="M9.500 .500v4h4" fill="#f2f2f2" stroke="#adadad"/><circle cx="12.3" cy="12.5" r="3.300" fill="#ee7a2e" stroke="#c5520f" stroke-width=".8"/><path d="M10.3 12.5h4" stroke="#fff" stroke-width="1.300"/></svg></div>
<div class="a " style="left:852px;top:75px;width:26px;height:22px;border:1px solid #8a8a8a;border-radius:3px;background:linear-gradient(180deg,#f3f3f3 0,#ececec 48%,#dedede 52%,#d0d0d0 100%);box-shadow:inset 0 0 0 1px rgba(255,255,255,.7)"></div>
<div class="a" style="left:857px;top:78px;width:16px;height:16px;"><svg width="16" height="16" viewBox="0 0 16 16" ><path d="M1.500 2.500h5l1 1.500h6v2h-12z" fill="#f7d681" stroke="#c99a2e"/><path d="M.800 6.500h13.700l-1.500 6h-12.200z" fill="#fbe3a0" stroke="#c99a2e"/><circle cx="12" cy="12" r="3.300" fill="#5fb336" stroke="#3d8a1e" stroke-width=".8"/><path d="M10 12h4" stroke="#fff" stroke-width="1.300"/><path d="M12 10v4" stroke="#fff" stroke-width="1.300"/></svg></div>
<div class="a " style="left:880px;top:75px;width:26px;height:22px;border:1px solid #8a8a8a;border-radius:3px;background:linear-gradient(180deg,#f3f3f3 0,#ececec 48%,#dedede 52%,#d0d0d0 100%);box-shadow:inset 0 0 0 1px rgba(255,255,255,.7)"></div>
<div class="a" style="left:885px;top:78px;width:16px;height:16px;"><svg width="16" height="16" viewBox="0 0 16 16" ><path d="M3.200 13l5.600-5.600" stroke="#c9781a" stroke-width="4.200" stroke-linecap="round"/><path d="M3.200 13l5.600-5.600" stroke="#f7a030" stroke-width="2.800" stroke-linecap="round"/><path d="M3 12.300l5-5" stroke="#ffc878" stroke-width=".9" stroke-linecap="round"/><path d="M14.830 3.830A4 4 0 1 1 12.170 1.170L10.330 3.010L12.990 5.670Z" fill="#dcdcdc" stroke="#858585" stroke-width=".9" stroke-linejoin="round"/></svg></div>
<div class="a " style="left:909px;top:75px;width:188px;height:22px;background:#fff;border:1px solid;border-color:#b5b8bf #dde0e6 #e3e6ec #dde0e6;border-radius:3px"></div>
<div class="a " style="left:1100px;top:75px;width:26px;height:22px;border:1px solid #b3b3b3;border-radius:3px;background:#f4f4f4"></div>
<div class="a" style="left:1105px;top:78px;width:16px;height:16px;"><svg width="16" height="16" viewBox="0 0 16 16" ><path d="M1.500 2.500h12l-4.500 5v5l-3 1.500v-6.500z" fill="#e3e3e3" stroke="#8a8a8a"/><path d="M9.500 9.500l5 5M14.500 9.500l-5 5" stroke="#444" stroke-width="1.700"/></svg></div>
<div class="a " style="left:795px;top:100px;width:334px;height:243px;border:1px solid #828790;background:#fff"></div>
<div class="a" style="left:801px;top:103px;width:16px;height:16px;"><svg width="16" height="16" viewBox="0 0 16 16" ><path d="M1.500 1.500h6v10h-6z" fill="#f4f4f4" stroke="#a8a8a8"/><path d="M4.500 3.500h6v10h-6z" fill="#f7f7f7" stroke="#a8a8a8"/><path d="M7.500 5.500h5l2 2v8h-7z" fill="#fdfdfd" stroke="#9d9d9d"/><path d="M12.500 5.500v2h2" fill="#eee" stroke="#9d9d9d"/></svg></div>
<div class="t " style="left:821.4px;top:104px;letter-spacing:-0.266px;">Source files</div>
<div class="a " style="left:807px;top:119px;width:1px;height:83px;background-image:linear-gradient(#808080 50%,transparent 50%);background-size:1px 2px"></div>
<div class="a " style="left:808px;top:129px;width:7px;height:1px;background-image:linear-gradient(90deg,#808080 50%,transparent 50%);background-size:2px 1px"></div>
<div class="a" style="left:816px;top:121px;width:16px;height:16px;"><svg width="16" height="16" viewBox="0 0 16 16" ><path d="M1.500 .500h9l4 4v11h-13z" fill="#fcfcfc" stroke="#bababa"/><path d="M10.500 .500v4h4" fill="#f0f0f0" stroke="#bababa"/><path d="M4 5.500h7.500M4 7.500h8M4 9.500h8M4 11.500h8M4 13.500h8" stroke="#a6a6a6" stroke-width=".9"/></svg></div>
<div class="t " style="left:836.5px;top:122px;letter-spacing:0.22px;">import\iz\types.d</div>
<div class="a " style="left:808px;top:147px;width:7px;height:1px;background-image:linear-gradient(90deg,#808080 50%,transparent 50%);background-size:2px 1px"></div>
<div class="a" style="left:816px;top:139px;width:16px;height:16px;"><svg width="16" height="16" viewBox="0 0 16 16" ><path d="M1.500 .500h9l4 4v11h-13z" fill="#fcfcfc" stroke="#bababa"/><path d="M10.500 .500v4h4" fill="#f0f0f0" stroke="#bababa"/><path d="M4 5.500h7.500M4 7.500h8M4 9.500h8M4 11.500h8M4 13.500h8" stroke="#a6a6a6" stroke-width=".9"/></svg></div>
<div class="t " style="left:836.5px;top:140px;letter-spacing:0.129px;">import\iz\streams.d</div>
<div class="a " style="left:808px;top:165px;width:7px;height:1px;background-image:linear-gradient(90deg,#808080 50%,transparent 50%);background-size:2px 1px"></div>
<div class="a" style="left:816px;top:157px;width:16px;height:16px;"><svg width="16" height="16" viewBox="0 0 16 16" ><path d="M1.500 .500h9l4 4v11h-13z" fill="#fcfcfc" stroke="#bababa"/><path d="M10.500 .500v4h4" fill="#f0f0f0" stroke="#bababa"/><path d="M4 5.500h7.500M4 7.500h8M4 9.500h8M4 11.500h8M4 13.500h8" stroke="#a6a6a6" stroke-width=".9"/></svg></div>
<div class="t " style="left:836.5px;top:158px;letter-spacing:0.18px;">import\iz\containers.d</div>
<div class="a " style="left:808px;top:183px;width:7px;height:1px;background-image:linear-gradient(90deg,#808080 50%,transparent 50%);background-size:2px 1px"></div>
<div class="a" style="left:816px;top:175px;width:16px;height:16px;"><svg width="16" height="16" viewBox="0 0 16 16" ><path d="M1.500 .500h9l4 4v11h-13z" fill="#fcfcfc" stroke="#bababa"/><path d="M10.500 .500v4h4" fill="#f0f0f0" stroke="#bababa"/><path d="M4 5.500h7.500M4 7.500h8M4 9.500h8M4 11.500h8M4 13.500h8" stroke="#a6a6a6" stroke-width=".9"/></svg></div>
<div class="t " style="left:836.5px;top:176px;letter-spacing:0.18px;">import\iz\properties.d</div>
<div class="a " style="left:808px;top:201px;width:7px;height:1px;background-image:linear-gradient(90deg,#808080 50%,transparent 50%);background-size:2px 1px"></div>
<div class="a" style="left:816px;top:193px;width:16px;height:16px;"><svg width="16" height="16" viewBox="0 0 16 16" ><path d="M1.500 .500h9l4 4v11h-13z" fill="#fcfcfc" stroke="#bababa"/><path d="M10.500 .500v4h4" fill="#f0f0f0" stroke="#bababa"/><path d="M4 5.500h7.500M4 7.500h8M4 9.500h8M4 11.500h8M4 13.500h8" stroke="#a6a6a6" stroke-width=".9"/></svg></div>
<div class="a " style="left:834px;top:192px;width:115px;height:18px;border:1px solid #dadada;border-radius:3px;background:linear-gradient(180deg,#f8f8f8,#e8e8e8)"></div>
<div class="t " style="left:836.5px;top:194px;letter-spacing:0.089px;">import\iz\serializer.d</div>
<div class="a" style="left:801px;top:210px;width:16px;height:16px;"><svg width="16" height="16" viewBox="0 0 16 16" ><path d="M3.200 13l5.600-5.600" stroke="#2f6fbe" stroke-width="4.200" stroke-linecap="round"/><path d="M3.200 13l5.600-5.600" stroke="#5b9be0" stroke-width="2.800" stroke-linecap="round"/><path d="M3 12.300l5-5" stroke="#a8ccf4" stroke-width=".9" stroke-linecap="round"/><path d="M14.830 3.830A4 4 0 1 1 12.170 1.170L10.330 3.010L12.990 5.670Z" fill="#dcdcdc" stroke="#858585" stroke-width=".9" stroke-linejoin="round"/></svg></div>
<div class="t " style="left:821.6px;top:212px;letter-spacing:0.073px;">Configurations</div>
<div class="a " style="left:807px;top:227px;width:1px;height:65px;background-image:linear-gradient(#808080 50%,transparent 50%);background-size:1px 2px"></div>
<div class="a " style="left:808px;top:237px;width:6px;height:1px;background-image:linear-gradient(90deg,#808080 50%,transparent 50%);background-size:2px 1px"></div>
<div class="a" style="left:821.5px;top:233.5px;width:11px;height:11px"><svg width="11" height="11" viewBox="0 0 16 16" ><path d="M15.13 6.99L15.13 9.01L12.86 9.17L12.26 10.61L13.76 12.32L12.32 13.76L10.61 12.26L9.17 12.86L9.01 15.13L6.99 15.13L6.83 12.86L5.39 12.26L3.68 13.76L2.24 12.32L3.74 10.61L3.14 9.17L0.87 9.01L0.87 6.99L3.14 6.83L3.74 5.39L2.24 3.68L3.68 2.24L5.39 3.74L6.83 3.14L6.99 0.87L9.01 0.87L9.17 3.14L10.61 3.74L12.32 2.24L13.76 3.68L12.26 5.39L12.86 6.83Z" fill="#d6d6d6" stroke="#808080" stroke-width="1.3" stroke-linejoin="round"/><circle cx="8" cy="8" r="2.6" fill="#f3f3f3" stroke="#808080" stroke-width="1.3"/></svg></div>
<div class="t " style="left:836.7px;top:230px;letter-spacing:-0.551px;">release</div>
<div class="a " style="left:808px;top:255px;width:6px;height:1px;background-image:linear-gradient(90deg,#808080 50%,transparent 50%);background-size:2px 1px"></div>
<div class="a" style="left:821.5px;top:251.5px;width:11px;height:11px"><svg width="11" height="11" viewBox="0 0 16 16" ><path d="M15.13 6.99L15.13 9.01L12.86 9.17L12.26 10.61L13.76 12.32L12.32 13.76L10.61 12.26L9.17 12.86L9.01 15.13L6.99 15.13L6.83 12.86L5.39 12.26L3.68 13.76L2.24 12.32L3.74 10.61L3.14 9.17L0.87 9.01L0.87 6.99L3.14 6.83L3.74 5.39L2.24 3.68L3.68 2.24L5.39 3.74L6.83 3.14L6.99 0.87L9.01 0.87L9.17 3.14L10.61 3.74L12.32 2.24L13.76 3.68L12.26 5.39L12.86 6.83Z" fill="#d6d6d6" stroke="#808080" stroke-width="1.3" stroke-linejoin="round"/><circle cx="8" cy="8" r="2.6" fill="#f3f3f3" stroke="#808080" stroke-width="1.3"/></svg></div>
<div class="t " style="left:836.7px;top:248px;letter-spacing:-0.074px;">debug</div>
<div class="a " style="left:808px;top:273px;width:6px;height:1px;background-image:linear-gradient(90deg,#808080 50%,transparent 50%);background-size:2px 1px"></div>
<div class="a" style="left:821.5px;top:269.5px;width:11px;height:11px"><svg width="11" height="11" viewBox="0 0 16 16" ><path d="M15.13 6.99L15.13 9.01L12.86 9.17L12.26 10.61L13.76 12.32L12.32 13.76L10.61 12.26L9.17 12.86L9.01 15.13L6.99 15.13L6.83 12.86L5.39 12.26L3.68 13.76L2.24 12.32L3.74 10.61L3.14 9.17L0.87 9.01L0.87 6.99L3.14 6.83L3.74 5.39L2.24 3.68L3.68 2.24L5.39 3.74L6.83 3.14L6.99 0.87L9.01 0.87L9.17 3.14L10.61 3.74L12.32 2.24L13.76 3.68L12.26 5.39L12.86 6.83Z" fill="#d6d6d6" stroke="#808080" stroke-width="1.3" stroke-linejoin="round"/><circle cx="8" cy="8" r="2.6" fill="#f3f3f3" stroke="#808080" stroke-width="1.3"/></svg></div>
<div class="t " style="left:836.7px;top:266px;letter-spacing:-0.045px;">unittest (active)</div>
<div class="a " style="left:808px;top:291px;width:6px;height:1px;background-image:linear-gradient(90deg,#808080 50%,transparent 50%);background-size:2px 1px"></div>
<div class="a" style="left:821.5px;top:287.5px;width:11px;height:11px"><svg width="11" height="11" viewBox="0 0 16 16" ><path d="M15.13 6.99L15.13 9.01L12.86 9.17L12.26 10.61L13.76 12.32L12.32 13.76L10.61 12.26L9.17 12.86L9.01 15.13L6.99 15.13L6.83 12.86L5.39 12.26L3.68 13.76L2.24 12.32L3.74 10.61L3.14 9.17L0.87 9.01L0.87 6.99L3.14 6.83L3.74 5.39L2.24 3.68L3.68 2.24L5.39 3.74L6.83 3.14L6.99 0.87L9.01 0.87L9.17 3.14L10.61 3.74L12.32 2.24L13.76 3.68L12.26 5.39L12.86 6.83Z" fill="#d6d6d6" stroke="#808080" stroke-width="1.3" stroke-linejoin="round"/><circle cx="8" cy="8" r="2.6" fill="#f3f3f3" stroke="#808080" stroke-width="1.3"/></svg></div>
<div class="t " style="left:836.7px;top:284px;letter-spacing:-0.565px;">test64</div>
<svg class="a" style="left:948px;top:346px" width="30" height="4"><rect width="30" height="4" fill="url(#mg)"/></svg>
<svg class="a" style="left:795px;top:354px" width="104" height="7"><defs><pattern id="gp795_355" width="4" height="4" patternUnits="userSpaceOnUse"><rect width="4" height="4" fill="#f6f6f6"/><rect x="0" y="1" width="1" height="1" fill="#9a9a9a"/><rect x="2" y="3" width="1" height="1" fill="#9a9a9a"/><rect x="1" y="2" width="1" height="1" fill="#fff"/><rect x="3" y="0" width="1" height="1" fill="#fff"/></pattern></defs><rect x="0" y="1" width="104" height="5" fill="url(#gp795_355)"/></svg>
<div class="t " style="left:901px;top:351px;letter-spacing:0.091px;">Project configuration</div>
<svg class="a" style="left:1015px;top:354px" width="101" height="7"><defs><pattern id="gp1015_355" width="4" height="4" patternUnits="userSpaceOnUse"><rect width="4" height="4" fill="#f6f6f6"/><rect x="0" y="1" width="1" height="1" fill="#9a9a9a"/><rect x="2" y="3" width="1" height="1" fill="#9a9a9a"/><rect x="1" y="2" width="1" height="1" fill="#fff"/><rect x="3" y="0" width="1" height="1" fill="#fff"/></pattern></defs><rect x="0" y="1" width="101" height="5" fill="url(#gp1015_355)"/></svg>
<div class="xbtn" style="left:1118px;top:349px"><svg width="9" height="8" viewBox="0 0 9 8" style="position:absolute;left:1px;top:3.5px"><path d="M1.500 1.500l6 5M7.500 1.500l-6 5" stroke="#2e3446" stroke-width="3.500" stroke-linecap="butt"/><path d="M1.500 1.500l6 5M7.500 1.500l-6 5" stroke="#fff" stroke-width="1.500" stroke-linecap="butt"/></svg></div>
<div class="a " style="left:796px;top:370px;width:242px;height:22px;border:1px solid #6f6f6f;border-radius:3px;background:linear-gradient(180deg,#f3f3f3 0,#ececec 48%,#dedede 52%,#d0d0d0 100%);box-shadow:inset 0 0 0 1px rgba(255,255,255,.7)"></div>
<div class="t " style="left:800px;top:374px;letter-spacing:0.101px;">unittest</div>
<svg class="a" style="left:1025px;top:378px" width="9" height="5" viewBox="0 0 9 5"><path d="M0 0h9L4.500 5z" fill="#000"/></svg>
<div class="a " style="left:1040px;top:369px;width:28px;height:22px;border:1px solid #8a8a8a;border-radius:3px;background:linear-gradient(180deg,#f3f3f3 0,#ececec 48%,#dedede 52%,#d0d0d0 100%);box-shadow:inset 0 0 0 1px rgba(255,255,255,.7)"></div>
<div class="a" style="left:1046px;top:372px;width:16px;height:16px;"><svg width="16" height="16" viewBox="0 0 16 16" ><path d="M14.43 6.51L14.43 8.49L12.46 8.69L11.85 10.16L13.10 11.70L11.70 13.10L10.16 11.85L8.69 12.46L8.49 14.43L6.51 14.43L6.31 12.46L4.84 11.85L3.30 13.10L1.90 11.70L3.15 10.16L2.54 8.69L0.57 8.49L0.57 6.51L2.54 6.31L3.15 4.84L1.90 3.30L3.30 1.90L4.84 3.15L6.31 2.54L6.51 0.57L8.49 0.57L8.69 2.54L10.16 3.15L11.70 1.90L13.10 3.30L11.85 4.84L12.46 6.31Z" fill="#d2d2d2" stroke="#858585" stroke-width="1.1" stroke-linejoin="round"/><circle cx="7.5" cy="7.5" r="2.5" fill="#f3f3f3" stroke="#858585" stroke-width="1.1"/><circle cx="12" cy="12" r="3.300" fill="#5fb336" stroke="#3d8a1e" stroke-width=".8"/><path d="M10 12h4" stroke="#fff" stroke-width="1.300"/><path d="M12 10v4" stroke="#fff" stroke-width="1.300"/></svg></div>
<div class="a " style="left:1070px;top:369px;width:28px;height:22px;border:1px solid #8a8a8a;border-radius:3px;background:linear-gradient(180deg,#f3f3f3 0,#ececec 48%,#dedede 52%,#d0d0d0 100%);box-shadow:inset 0 0 0 1px rgba(255,255,255,.7)"></div>
<div class="a" style="left:1076px;top:372px;width:16px;height:16px;"><svg width="16" height="16" viewBox="0 0 16 16" ><path d="M14.43 6.51L14.43 8.49L12.46 8.69L11.85 10.16L13.10 11.70L11.70 13.10L10.16 11.85L8.69 12.46L8.49 14.43L6.51 14.43L6.31 12.46L4.84 11.85L3.30 13.10L1.90 11.70L3.15 10.16L2.54 8.69L0.57 8.49L0.57 6.51L2.54 6.31L3.15 4.84L1.90 3.30L3.30 1.90L4.84 3.15L6.31 2.54L6.51 0.57L8.49 0.57L8.69 2.54L10.16 3.15L11.70 1.90L13.10 3.30L11.85 4.84L12.46 6.31Z" fill="#d2d2d2" stroke="#858585" stroke-width="1.1" stroke-linejoin="round"/><circle cx="7.5" cy="7.5" r="2.5" fill="#f3f3f3" stroke="#858585" stroke-width="1.1"/><circle cx="12" cy="12" r="3.300" fill="#e8503a" stroke="#b52a18" stroke-width=".8"/><path d="M10 12h4" stroke="#fff" stroke-width="1.300"/></svg></div>
<div class="a " style="left:1100px;top:369px;width:28px;height:22px;border:1px solid #8a8a8a;border-radius:3px;background:linear-gradient(180deg,#f3f3f3 0,#ececec 48%,#dedede 52%,#d0d0d0 100%);box-shadow:inset 0 0 0 1px rgba(255,255,255,.7)"></div>
<div class="a" style="left:1106px;top:372px;width:16px;height:16px;"><svg width="16" height="16" viewBox="0 0 16 16" ><path d="M14.43 6.51L14.43 8.49L12.46 8.69L11.85 10.16L13.10 11.70L11.70 13.10L10.16 11.85L8.69 12.46L8.49 14.43L6.51 14.43L6.31 12.46L4.84 11.85L3.30 13.10L1.90 11.70L3.15 10.16L2.54 8.69L0.57 8.49L0.57 6.51L2.54 6.31L3.15 4.84L1.90 3.30L3.30 1.90L4.84 3.15L6.31 2.54L6.51 0.57L8.49 0.57L8.69 2.54L10.16 3.15L11.70 1.90L13.10 3.30L11.85 4.84L12.46 6.31Z" fill="#d2d2d2" stroke="#858585" stroke-width="1.1" stroke-linejoin="round"/><circle cx="7.5" cy="7.5" r="2.5" fill="#f3f3f3" stroke="#858585" stroke-width="1.1"/><path d="M7.500 9.500h4v-2.500l4 4-4 4v-2.500h-4z" fill="#7ccf3a" stroke="#3d8a1e" stroke-width=".8"/></svg></div>
<div class="a " style="left:797px;top:396px;width:110px;height:254px;border:1px solid #828790;background:#fff"></div>
<div class="t " style="left:805.4px;top:400px;letter-spacing:-0.527px;">General</div>
<div class="t " style="left:805.7px;top:418px;letter-spacing:-0.293px;">Categories</div>
<div class="a " style="left:809px;top:433px;width:1px;height:101px;background-image:linear-gradient(#808080 50%,transparent 50%);background-size:1px 2px"></div>
<div class="a " style="left:810px;top:443px;width:6px;height:1px;background-image:linear-gradient(90deg,#808080 50%,transparent 50%);background-size:2px 1px"></div>
<div class="t " style="left:820.4px;top:436px;letter-spacing:-0.549px;">Messages</div>
<div class="a " style="left:810px;top:461px;width:6px;height:1px;background-image:linear-gradient(90deg,#808080 50%,transparent 50%);background-size:2px 1px"></div>
<div class="t " style="left:820.4px;top:454px;letter-spacing:-0.084px;">Debuging</div>
<div class="a " style="left:810px;top:479px;width:6px;height:1px;background-image:linear-gradient(90deg,#808080 50%,transparent 50%);background-size:2px 1px"></div>
<div class="t " style="left:820.4px;top:472px;letter-spacing:0.091px;">Documentation</div>
<div class="a " style="left:810px;top:497px;width:6px;height:1px;background-image:linear-gradient(90deg,#808080 50%,transparent 50%);background-size:2px 1px"></div>
<div class="t " style="left:820.4px;top:490px;letter-spacing:0.246px;">Output</div>
<div class="a " style="left:810px;top:515px;width:6px;height:1px;background-image:linear-gradient(90deg,#808080 50%,transparent 50%);background-size:2px 1px"></div>
<div class="t " style="left:820.4px;top:508px;letter-spacing:-0.185px;">Others</div>
<div class="a " style="left:810px;top:533px;width:6px;height:1px;background-image:linear-gradient(90deg,#808080 50%,transparent 50%);background-size:2px 1px"></div>
<div class="t " style="left:820.4px;top:526px;letter-spacing:-0.477px;">Paths</div>
<div class="a " style="left:802px;top:543px;width:78px;height:17px;border:1px solid #dadada;border-radius:3px;background:linear-gradient(180deg,#f8f8f8,#e9e9e9)"></div>
<div class="t " style="left:805.7px;top:544px;letter-spacing:-0.16px;">All categories</div>
<div class="a " style="left:798px;top:632px;width:108px;height:17px;background:linear-gradient(180deg,#e3e3e3 0,#efefef 30%,#f1f1f1 100%)"></div>
<svg class="a" style="left:802px;top:635px" width="9" height="9" viewBox="0 0 9 9"><path d="M6.500 0.500L2.500 4.500L6.500 8.500Z" fill="#3a3a3a"/></svg>
<svg class="a" style="left:893px;top:635px" width="9" height="9" viewBox="0 0 9 9"><path d="M2.500 0.500L6.500 4.500L2.500 8.500Z" fill="#3a3a3a"/></svg>
<div class="a " style="left:818px;top:632px;width:64px;height:15px;border:1px solid #979797;border-radius:2px;background:linear-gradient(180deg,#f4f4f4 0,#e8e8e8 45%,#d4d4d4 50%,#dcdcdc 100%)"><div class="a" style="left:28px;top:4px;width:1px;height:7px;background:#555;box-shadow:2px 0 0 #555,4px 0 0 #555,1px 0 0 #fff,3px 0 0 #fff,5px 0 0 #fff"></div></div>
<svg class="a" style="left:908px;top:510px" width="4" height="30"><rect width="4" height="30" fill="url(#vg)"/></svg>
<div class="a " style="left:912px;top:396px;width:215px;height:254px;border:1px solid #a0a0a0;background:#f0f0f0"></div>
<div class="a " style="left:935px;top:397px;width:1px;height:75px;background:#8a8a8a"></div>
<div class="a " style="left:935px;top:472px;width:17px;height:1px;background:#8a8a8a"></div>
<div class="a " style="left:951px;top:472px;width:1px;height:150px;background:#8a8a8a"></div>
<div class="a " style="left:935px;top:622px;width:17px;height:1px;background:#8a8a8a"></div>
<div class="a " style="left:935px;top:622px;width:1px;height:27px;background:#8a8a8a"></div>
<div class="a " style="left:1040px;top:397px;width:1px;height:252px;background:#8a8a8a"></div>
<div class="a " style="left:936px;top:422px;width:172px;height:1px;background-image:linear-gradient(90deg,#9a9a9a 50%,transparent 50%);background-size:2px 1px"></div>
<div class="t" style="left:938.6px;top:403px;width:101.4px;overflow:hidden;letter-spacing:0.097px;">debugingOptions</div>
<div class="t" style="left:1045.4px;top:403px;width:62.59999999999991px;overflow:hidden;letter-spacing:-0.086px">(TDebugOpts)</div>
<div class="a " style="left:936px;top:447px;width:172px;height:1px;background-image:linear-gradient(90deg,#9a9a9a 50%,transparent 50%);background-size:2px 1px"></div>
<div class="t" style="left:938.6px;top:428px;width:101.4px;overflow:hidden;letter-spacing:0.202px;">documentationOpts</div>
<div class="t" style="left:1045.4px;top:428px;width:62.59999999999991px;overflow:hidden;letter-spacing:-0.19px">(TDocOpts)</div>
<div class="a " style="left:936px;top:472px;width:172px;height:1px;background-image:linear-gradient(90deg,#9a9a9a 50%,transparent 50%);background-size:2px 1px"></div>
<div class="t" style="left:938.6px;top:453px;width:101.4px;overflow:hidden;letter-spacing:-0.257px;">messagesOptions</div>
<div class="t" style="left:1045.4px;top:453px;width:62.59999999999991px;overflow:hidden;letter-spacing:-0.173px">(TMsgOpts)</div>
<div class="a " style="left:952px;top:497px;width:156px;height:1px;background-image:linear-gradient(90deg,#9a9a9a 50%,transparent 50%);background-size:2px 1px"></div>
<div class="t" style="left:954.6px;top:478px;width:85.4px;overflow:hidden;letter-spacing:0.077px;">additionalWarnings</div>
<div class="t" style="left:1045.4px;top:478px;width:62.59999999999991px;overflow:hidden;letter-spacing:-0.132px">True</div>
<div class="a " style="left:952px;top:522px;width:156px;height:1px;background-image:linear-gradient(90deg,#9a9a9a 50%,transparent 50%);background-size:2px 1px"></div>
<div class="t" style="left:954.6px;top:503px;width:85.4px;overflow:hidden;letter-spacing:0.163px;">depreciationHandling</div>
<div class="t" style="left:1045.4px;top:503px;width:62.59999999999991px;overflow:hidden;letter-spacing:-0.032px">warning</div>
<div class="a " style="left:952px;top:547px;width:156px;height:1px;background-image:linear-gradient(90deg,#9a9a9a 50%,transparent 50%);background-size:2px 1px"></div>
<div class="t" style="left:954.6px;top:528px;width:85.4px;overflow:hidden;letter-spacing:-0.064px;">quiet</div>
<div class="t" style="left:1045.4px;top:528px;width:62.59999999999991px;overflow:hidden;letter-spacing:-0.729px">False</div>
<div class="a " style="left:952px;top:572px;width:156px;height:1px;background-image:linear-gradient(90deg,#9a9a9a 50%,transparent 50%);background-size:2px 1px"></div>
<div class="t" style="left:954.6px;top:553px;width:85.4px;overflow:hidden;letter-spacing:0.078px;">tlsInformations</div>
<div class="t" style="left:1045.4px;top:553px;width:62.59999999999991px;overflow:hidden;letter-spacing:-0.729px">False</div>
<div class="a " style="left:952px;top:597px;width:156px;height:1px;background-image:linear-gradient(90deg,#9a9a9a 50%,transparent 50%);background-size:2px 1px"></div>
<div class="a " style="left:952px;top:573px;width:88px;height:24px;background:#3399ff"></div>
<div class="a " style="left:1042px;top:573px;width:66px;height:22px;background:#fff;border-right:1px solid #e0e0e0;border-bottom:1px solid #d6d6d6"></div>
<div class="t" style="left:954.6px;top:578px;width:85.4px;overflow:hidden;letter-spacing:-0.342px;color:#fff;">verbose</div>
<div class="t" style="left:1047.7px;top:576px;width:62.59999999999991px;overflow:hidden;letter-spacing:-0.132px">True</div>
<div class="a " style="left:952px;top:622px;width:156px;height:1px;background-image:linear-gradient(90deg,#9a9a9a 50%,transparent 50%);background-size:2px 1px"></div>
<div class="t" style="left:954.6px;top:603px;width:85.4px;overflow:hidden;letter-spacing:-0.115px;">warnings</div>
<div class="t" style="left:1045.4px;top:603px;width:62.59999999999991px;overflow:hidden;letter-spacing:-0.132px">True</div>
<div class="t" style="left:938.6px;top:628px;width:101.4px;overflow:hidden;letter-spacing:-0.204px;">name</div>
<div class="t" style="left:1045.4px;top:628px;width:62.59999999999991px;overflow:hidden;letter-spacing:0.101px">unittest</div>
<svg class="a" style="left:1095px;top:582px" width="9" height="5" viewBox="0 0 9 5"><path d="M0 0h9L4.500 5z" fill="#000"/></svg>
<svg class="a" style="left:922px;top:409px" width="7" height="10" viewBox="0 0 7 10"><path d="M1 1L5.500 5L1 9Z" fill="#fff" stroke="#8c8c8c" stroke-width="1"/></svg>
<svg class="a" style="left:922px;top:434px" width="7" height="10" viewBox="0 0 7 10"><path d="M1 1L5.500 5L1 9Z" fill="#fff" stroke="#8c8c8c" stroke-width="1"/></svg>
<svg class="a" style="left:922px;top:461px" width="7" height="7" viewBox="0 0 7 7"><path d="M6 .500V6H.500Z" fill="#595959" stroke="#262626" stroke-width=".8"/></svg>
<svg class="a" style="left:932.500px;top:581.500px" width="8" height="8" viewBox="0 0 9 9"><path d="M.500 3.300h4V.800L8.500 4.500 4.500 8.200V5.700h-4z" fill="#3d78d8" stroke="#2a56b0" stroke-width=".6"/></svg>
<div class="a " style="left:1108px;top:397px;width:18px;height:252px;background:linear-gradient(90deg,#e3e3e3 0,#efefef 30%,#f1f1f1 100%)"></div>
<svg class="a" style="left:1113px;top:402px" width="9" height="9" viewBox="0 0 9 9"><path d="M0.500 6.500L4.500 2.500L8.500 6.500Z" fill="#3a3a3a"/></svg>
<svg class="a" style="left:1113px;top:635px" width="9" height="9" viewBox="0 0 9 9"><path d="M0.500 2.500L4.500 6.500L8.500 2.500Z" fill="#3a3a3a"/></svg>
<div class="a " style="left:1110px;top:417px;width:14px;height:163px;border:1px solid #979797;border-radius:2px;background:linear-gradient(90deg,#f4f4f4 0,#e8e8e8 45%,#d4d4d4 50%,#dcdcdc 100%)"><div class="a" style="left:3px;top:77px;width:7px;height:1px;background:#555;box-shadow:0 2px 0 #555,0 4px 0 #555,0 1px 0 #fff,0 3px 0 #fff,0 5px 0 #fff"></div></div>
<div class="a " style="left:75px;top:50px;width:287px;height:302px;background:#f0f0f0;border:1px solid;border-color:#fbfbfb #9a9a9a #9a9a9a #fbfbfb;box-shadow:inset -1px -1px 0 #f8f8f8"></div>
<div class="a " style="left:104px;top:53px;width:1px;height:296px;background:#e2e3e3"></div>
<div class="a " style="left:105px;top:53px;width:1px;height:296px;background:#fff"></div>
<div class="a " style="left:106px;top:123px;width:254px;height:1px;background:#e0e0e0"></div>
<div class="a " style="left:106px;top:124px;width:254px;height:1px;background:#fff"></div>
<div class="a " style="left:106px;top:175px;width:254px;height:1px;background:#e0e0e0"></div>
<div class="a " style="left:106px;top:176px;width:254px;height:1px;background:#fff"></div>
<div class="a " style="left:106px;top:227px;width:254px;height:1px;background:#e0e0e0"></div>
<div class="a " style="left:106px;top:228px;width:254px;height:1px;background:#fff"></div>
<div class="a " style="left:106px;top:301px;width:254px;height:1px;background:#e0e0e0"></div>
<div class="a " style="left:106px;top:302px;width:254px;height:1px;background:#fff"></div>
<div class="a " style="left:78px;top:231px;width:281px;height:22px;border:1px solid #aecff7;border-radius:3px;background:linear-gradient(180deg,#f4f8fd 0,#e6eefa 100%);box-shadow:inset 0 0 0 1px rgba(255,255,255,.5)"></div>
<div class="a" style="left:81px;top:56px;width:16px;height:16px;"><svg width="16" height="16" viewBox="0 0 16 16" ><defs><linearGradient id="ng" x1="0" y1="0" x2="1" y2="1"><stop offset="0" stop-color="#d9d9d9"/><stop offset="1" stop-color="#fafafa"/></linearGradient></defs><path d="M1.500 .500h8l4 4v10h-12z" fill="url(#ng)" stroke="#444" stroke-dasharray="1 1"/><path d="M9.500 .500v4h4" fill="#fff" stroke="#666" stroke-dasharray="1 1"/></svg></div>
<div class="t " style="left:110.5px;top:57px;letter-spacing:-0.014px;">New project</div>
<div class="a" style="left:81px;top:78px;width:16px;height:16px;"><svg width="16" height="16" viewBox="0 0 16 16" ><path d="M8.500 4.500h3.500l2.500 2.500v7.500h-6z" fill="#fafafa" stroke="#9c9c9c"/><path d="M12 4.500v2.500h2.500" fill="none" stroke="#9c9c9c"/><path d="M1.500 1.800h8.500v10h-8.500z" fill="#f1c45a" stroke="#d09a30"/><path d="M1.500 3.500l6.500 1.800v9.200l-6.500-2.300z" fill="#ffe28c" stroke="#d9a53a"/></svg></div>
<div class="t " style="left:110.5px;top:79px;letter-spacing:-0.114px;">Open project...</div>
<div class="a" style="left:81px;top:100px;width:16px;height:16px;"><svg width="16" height="16" viewBox="0 0 16 16" ><defs><linearGradient id="cg" x1="0" y1="0" x2="0" y2="1"><stop offset="0" stop-color="#fdfdfd"/><stop offset="1" stop-color="#e4e4e4"/></linearGradient></defs><path d="M1.500 .500h8l4 4v10h-12z" fill="url(#cg)" stroke="#a2a2a2"/><path d="M9.500 .500v4h4" fill="#fff" stroke="#a2a2a2"/><path d="M4 5.500c2 2 5 5 8 7.500M11.500 5.500c-2 2-5 5-7.500 7.500" stroke="#e01818" stroke-width="1.700" stroke-linecap="round" fill="none"/></svg></div>
<div class="t " style="left:110.5px;top:101px;letter-spacing:-0.141px;">Close project</div>
<div class="a" style="left:81px;top:130px;width:16px;height:16px;"><svg width="16" height="16" viewBox="0 0 16 16" ><rect x="3.5" y="3.5" width="10" height="10" fill="#d9ecfb" stroke="#2f7fc4"/><rect x="5.5" y="3.5" width="6" height="3.5" fill="#fff" stroke="#2f7fc4"/><rect x="6" y="9.5" width="5" height="4" fill="#5fa3dc" stroke="#2f7fc4"/><rect x="7" y="10.5" width="1.5" height="2" fill="#fff"/></svg></div>
<div class="t " style="left:110.5px;top:131px;letter-spacing:-0.292px;">Save project</div>
<div class="a" style="left:81px;top:152px;width:16px;height:16px;"><svg width="16" height="16" viewBox="0 0 16 16" ><rect x="1.5" y="1.5" width="12" height="12" fill="#d4e8fa" stroke="#2f7fc4"/><rect x="4" y="1.5" width="7" height="4.5" fill="#fff" stroke="#2f7fc4"/><rect x="4" y="9" width="7" height="4.5" fill="#4f97d6" stroke="#2f7fc4"/><path d="M8 13l1-3 5-5 2 2-5 5z" fill="#f6c467" stroke="#b47a2a" stroke-width=".8"/><path d="M14 5l2 2" stroke="#e05a6a" stroke-width="1.6"/></svg></div>
<div class="t " style="left:110.5px;top:153px;letter-spacing:-0.373px;">Save project as...</div>
<div class="a" style="left:81px;top:182px;width:16px;height:16px;"><svg width="16" height="16" viewBox="0 0 16 16" ><path d="M3.200 13l5.600-5.600" stroke="#c9781a" stroke-width="4.200" stroke-linecap="round"/><path d="M3.200 13l5.600-5.600" stroke="#f7a030" stroke-width="2.800" stroke-linecap="round"/><path d="M3 12.300l5-5" stroke="#ffc878" stroke-width=".9" stroke-linecap="round"/><path d="M14.830 3.830A4 4 0 1 1 12.170 1.170L10.330 3.010L12.990 5.670Z" fill="#dcdcdc" stroke="#858585" stroke-width=".9" stroke-linejoin="round"/></svg></div>
<div class="t " style="left:110.5px;top:183px;letter-spacing:-0.086px;">Projects options</div>
<div class="a" style="left:81px;top:204px;width:16px;height:16px;"><svg width="16" height="16" viewBox="0 0 16 16" ><path d="M9.26 8.39L9.26 9.61L8.01 9.72L7.64 10.62L8.44 11.58L7.58 12.44L6.62 11.64L5.72 12.01L5.61 13.26L4.39 13.26L4.28 12.01L3.38 11.64L2.42 12.44L1.56 11.58L2.36 10.62L1.99 9.72L0.74 9.61L0.74 8.39L1.99 8.28L2.36 7.38L1.56 6.42L2.42 5.56L3.38 6.36L4.28 5.99L4.39 4.74L5.61 4.74L5.72 5.99L6.62 6.36L7.58 5.56L8.44 6.42L7.64 7.38L8.01 8.28Z" fill="#a9a9a9" stroke="#6e6e6e" stroke-width="0.7" stroke-linejoin="round"/><circle cx="5" cy="9" r="1.4" fill="#f3f3f3" stroke="#6e6e6e" stroke-width="0.7"/><path d="M15.25 4.32L15.25 5.68L13.90 5.82L13.48 6.83L14.34 7.88L13.38 8.84L12.33 7.98L11.32 8.40L11.18 9.75L9.82 9.75L9.68 8.40L8.67 7.98L7.62 8.84L6.66 7.88L7.52 6.83L7.10 5.82L5.75 5.68L5.75 4.32L7.10 4.18L7.52 3.17L6.66 2.12L7.62 1.16L8.67 2.02L9.68 1.60L9.82 0.25L11.18 0.25L11.32 1.60L12.33 2.02L13.38 1.16L14.34 2.12L13.48 3.17L13.90 4.18Z" fill="#b5b5b5" stroke="#747474" stroke-width="0.7" stroke-linejoin="round"/><circle cx="10.5" cy="5" r="1.5" fill="#f3f3f3" stroke="#747474" stroke-width="0.7"/><circle cx="10.5" cy="10.5" r="4.6" fill="#2f7fe0" stroke="#1b56b0" stroke-width=".8"/><rect x="9.8" y="9.6" width="1.5" height="3.600" fill="#fff"/><rect x="9.8" y="7.3" width="1.5" height="1.500" fill="#fff"/></svg></div>
<div class="t " style="left:110.5px;top:205px;letter-spacing:-0.186px;">View Project source</div>
<div class="a" style="left:81px;top:234px;width:16px;height:16px;"><svg width="16" height="16" viewBox="0 0 16 16" ><path d="M12.94 5.81L12.94 7.59L11.17 7.77L10.62 9.10L11.74 10.48L10.48 11.74L9.10 10.62L7.77 11.17L7.59 12.94L5.81 12.94L5.63 11.17L4.30 10.62L2.92 11.74L1.66 10.48L2.78 9.10L2.23 7.77L0.46 7.59L0.46 5.81L2.23 5.63L2.78 4.30L1.66 2.92L2.92 1.66L4.30 2.78L5.63 2.23L5.81 0.46L7.59 0.46L7.77 2.23L9.10 2.78L10.48 1.66L11.74 2.92L10.62 4.30L11.17 5.63Z" fill="#8fc0ee" stroke="#4a8ad0" stroke-width="0.8" stroke-linejoin="round"/><circle cx="6.7" cy="6.7" r="2.5" fill="#f3f3f3" stroke="#4a8ad0" stroke-width="0.8"/><path d="M15.76 11.04L15.76 12.16L14.52 12.25L14.19 13.06L15.00 14.00L14.20 14.80L13.26 13.99L12.45 14.32L12.36 15.56L11.24 15.56L11.15 14.32L10.34 13.99L9.40 14.80L8.60 14.00L9.41 13.06L9.08 12.25L7.84 12.16L7.84 11.04L9.08 10.95L9.41 10.14L8.60 9.20L9.40 8.40L10.34 9.21L11.15 8.88L11.24 7.64L12.36 7.64L12.45 8.88L13.26 9.21L14.20 8.40L15.00 9.20L14.19 10.14L14.52 10.95Z" fill="#fbbd52" stroke="#dc8e20" stroke-width="0.7" stroke-linejoin="round"/><circle cx="11.8" cy="11.6" r="1.2" fill="#5a9ae0" stroke="#dc8e20" stroke-width="0.7"/></svg></div>
<div class="t " style="left:110.5px;top:235px;letter-spacing:0.042px;">Compile project</div>
<div class="t " style="left:300.6px;top:235px;letter-spacing:-0.253px;">Ctrl+F9</div>
<div class="a" style="left:81px;top:256px;width:16px;height:16px;"><svg width="16" height="16" viewBox="0 0 16 16" ><path d="M12.94 5.81L12.94 7.59L11.17 7.77L10.62 9.10L11.74 10.48L10.48 11.74L9.10 10.62L7.77 11.17L7.59 12.94L5.81 12.94L5.63 11.17L4.30 10.62L2.92 11.74L1.66 10.48L2.78 9.10L2.23 7.77L0.46 7.59L0.46 5.81L2.23 5.63L2.78 4.30L1.66 2.92L2.92 1.66L4.30 2.78L5.63 2.23L5.81 0.46L7.59 0.46L7.77 2.23L9.10 2.78L10.48 1.66L11.74 2.92L10.62 4.30L11.17 5.63Z" fill="#8fc0ee" stroke="#4a8ad0" stroke-width="0.8" stroke-linejoin="round"/><circle cx="6.7" cy="6.7" r="2.5" fill="#f3f3f3" stroke="#4a8ad0" stroke-width="0.8"/><path d="M15.76 11.04L15.76 12.16L14.52 12.25L14.19 13.06L15.00 14.00L14.20 14.80L13.26 13.99L12.45 14.32L12.36 15.56L11.24 15.56L11.15 14.32L10.34 13.99L9.40 14.80L8.60 14.00L9.41 13.06L9.08 12.25L7.84 12.16L7.84 11.04L9.08 10.95L9.41 10.14L8.60 9.20L9.40 8.40L10.34 9.21L11.15 8.88L11.24 7.64L12.36 7.64L12.45 8.88L13.26 9.21L14.20 8.40L15.00 9.20L14.19 10.14L14.52 10.95Z" fill="#fbbd52" stroke="#dc8e20" stroke-width="0.7" stroke-linejoin="round"/><circle cx="11.8" cy="11.6" r="1.2" fill="#5a9ae0" stroke="#dc8e20" stroke-width="0.7"/></svg></div>
<div class="t " style="left:110.5px;top:257px;letter-spacing:0.022px;">Compile and run project</div>
<div class="t " style="left:268.2px;top:257px;letter-spacing:-0.03px;">Shift+Ctrl+F9</div>
<div class="a" style="left:81px;top:278px;width:16px;height:16px;"><svg width="16" height="16" viewBox="0 0 16 16" ><path d="M12.94 5.81L12.94 7.59L11.17 7.77L10.62 9.10L11.74 10.48L10.48 11.74L9.10 10.62L7.77 11.17L7.59 12.94L5.81 12.94L5.63 11.17L4.30 10.62L2.92 11.74L1.66 10.48L2.78 9.10L2.23 7.77L0.46 7.59L0.46 5.81L2.23 5.63L2.78 4.30L1.66 2.92L2.92 1.66L4.30 2.78L5.63 2.23L5.81 0.46L7.59 0.46L7.77 2.23L9.10 2.78L10.48 1.66L11.74 2.92L10.62 4.30L11.17 5.63Z" fill="#8fc0ee" stroke="#4a8ad0" stroke-width="0.8" stroke-linejoin="round"/><circle cx="6.7" cy="6.7" r="2.5" fill="#f3f3f3" stroke="#4a8ad0" stroke-width="0.8"/><path d="M15.76 11.04L15.76 12.16L14.52 12.25L14.19 13.06L15.00 14.00L14.20 14.80L13.26 13.99L12.45 14.32L12.36 15.56L11.24 15.56L11.15 14.32L10.34 13.99L9.40 14.80L8.60 14.00L9.41 13.06L9.08 12.25L7.84 12.16L7.84 11.04L9.08 10.95L9.41 10.14L8.60 9.20L9.40 8.40L10.34 9.21L11.15 8.88L11.24 7.64L12.36 7.64L12.45 8.88L13.26 9.21L14.20 8.40L15.00 9.20L14.19 10.14L14.52 10.95Z" fill="#fbbd52" stroke="#dc8e20" stroke-width="0.7" stroke-linejoin="round"/><circle cx="11.8" cy="11.6" r="1.2" fill="#5a9ae0" stroke="#dc8e20" stroke-width="0.7"/></svg></div>
<div class="t " style="left:110.5px;top:279px;letter-spacing:-0.031px;">Compile and run project...</div>
<div class="a" style="left:81px;top:308px;width:16px;height:16px;"><svg width="16" height="16" viewBox="0 0 16 16" ><path d="M12.94 5.81L12.94 7.59L11.17 7.77L10.62 9.10L11.74 10.48L10.48 11.74L9.10 10.62L7.77 11.17L7.59 12.94L5.81 12.94L5.63 11.17L4.30 10.62L2.92 11.74L1.66 10.48L2.78 9.10L2.23 7.77L0.46 7.59L0.46 5.81L2.23 5.63L2.78 4.30L1.66 2.92L2.92 1.66L4.30 2.78L5.63 2.23L5.81 0.46L7.59 0.46L7.77 2.23L9.10 2.78L10.48 1.66L11.74 2.92L10.62 4.30L11.17 5.63Z" fill="#8fc0ee" stroke="#4a8ad0" stroke-width="0.8" stroke-linejoin="round"/><circle cx="6.7" cy="6.7" r="2.5" fill="#f3f3f3" stroke="#4a8ad0" stroke-width="0.8"/><path d="M15.76 11.04L15.76 12.16L14.52 12.25L14.19 13.06L15.00 14.00L14.20 14.80L13.26 13.99L12.45 14.32L12.36 15.56L11.24 15.56L11.15 14.32L10.34 13.99L9.40 14.80L8.60 14.00L9.41 13.06L9.08 12.25L7.84 12.16L7.84 11.04L9.08 10.95L9.41 10.14L8.60 9.20L9.40 8.40L10.34 9.21L11.15 8.88L11.24 7.64L12.36 7.64L12.45 8.88L13.26 9.21L14.20 8.40L15.00 9.20L14.19 10.14L14.52 10.95Z" fill="#fbbd52" stroke="#dc8e20" stroke-width="0.7" stroke-linejoin="round"/><circle cx="11.8" cy="11.6" r="1.2" fill="#5a9ae0" stroke="#dc8e20" stroke-width="0.7"/></svg></div>
<div class="t " style="left:110.5px;top:309px;letter-spacing:-0.133px;">Run project</div>
<div class="t " style="left:327.4px;top:309px;letter-spacing:-1.452px;">F9</div>
<div class="a" style="left:81px;top:330px;width:16px;height:16px;"><svg width="16" height="16" viewBox="0 0 16 16" ><path d="M12.94 5.81L12.94 7.59L11.17 7.77L10.62 9.10L11.74 10.48L10.48 11.74L9.10 10.62L7.77 11.17L7.59 12.94L5.81 12.94L5.63 11.17L4.30 10.62L2.92 11.74L1.66 10.48L2.78 9.10L2.23 7.77L0.46 7.59L0.46 5.81L2.23 5.63L2.78 4.30L1.66 2.92L2.92 1.66L4.30 2.78L5.63 2.23L5.81 0.46L7.59 0.46L7.77 2.23L9.10 2.78L10.48 1.66L11.74 2.92L10.62 4.30L11.17 5.63Z" fill="#8fc0ee" stroke="#4a8ad0" stroke-width="0.8" stroke-linejoin="round"/><circle cx="6.7" cy="6.7" r="2.5" fill="#f3f3f3" stroke="#4a8ad0" stroke-width="0.8"/><path d="M15.76 11.04L15.76 12.16L14.52 12.25L14.19 13.06L15.00 14.00L14.20 14.80L13.26 13.99L12.45 14.32L12.36 15.56L11.24 15.56L11.15 14.32L10.34 13.99L9.40 14.80L8.60 14.00L9.41 13.06L9.08 12.25L7.84 12.16L7.84 11.04L9.08 10.95L9.41 10.14L8.60 9.20L9.40 8.40L10.34 9.21L11.15 8.88L11.24 7.64L12.36 7.64L12.45 8.88L13.26 9.21L14.20 8.40L15.00 9.20L14.19 10.14L14.52 10.95Z" fill="#fbbd52" stroke="#dc8e20" stroke-width="0.7" stroke-linejoin="round"/><circle cx="11.8" cy="11.6" r="1.2" fill="#5a9ae0" stroke="#dc8e20" stroke-width="0.7"/></svg></div>
<div class="t " style="left:110.5px;top:331px;letter-spacing:-0.198px;">Run project...</div>
</body></html>
